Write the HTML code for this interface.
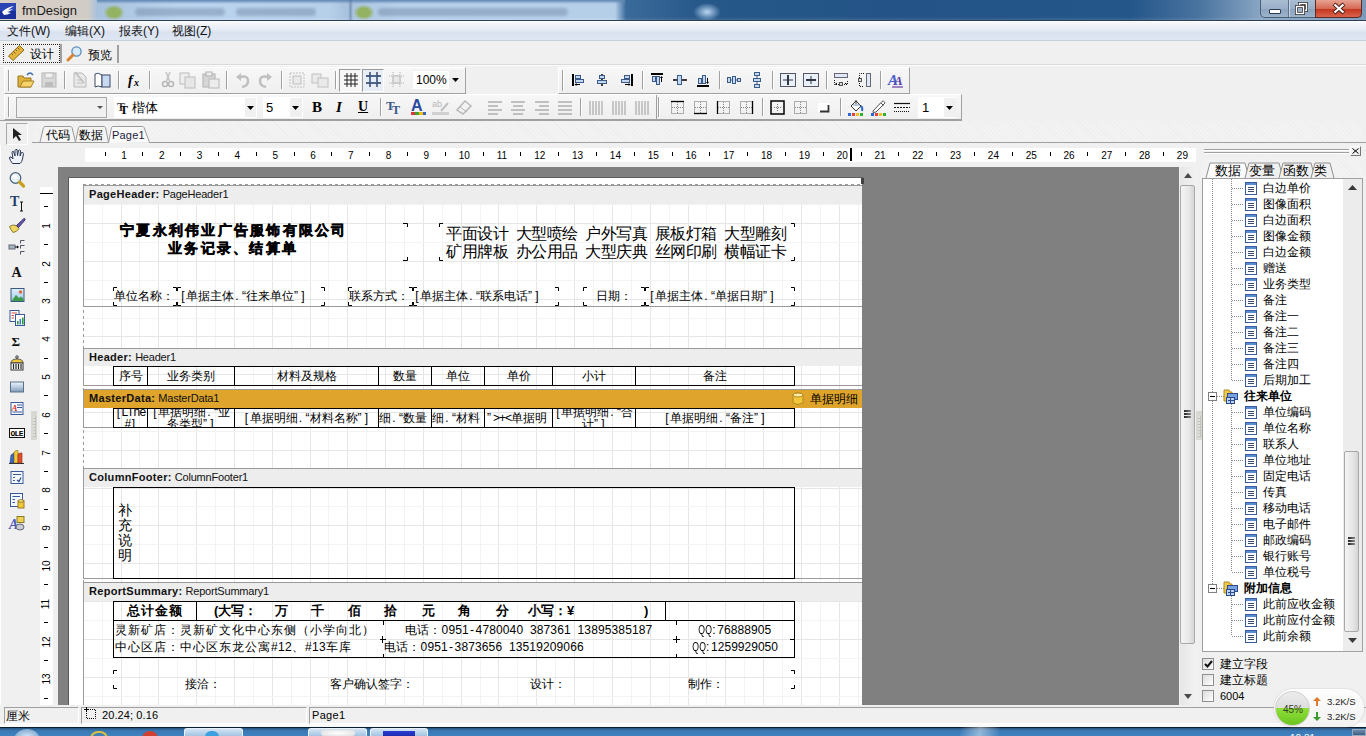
<!DOCTYPE html>
<html><head><meta charset="utf-8"><style>
*{box-sizing:border-box;margin:0;padding:0}
html,body{width:1366px;height:736px;overflow:hidden;background:#f0f0f0;font-family:"Liberation Sans",sans-serif;font-size:12px;color:#000;position:relative}
.a{position:absolute}
.t{position:absolute;white-space:nowrap;line-height:1}
svg{position:absolute;overflow:visible}
</style></head><body>
<div class="a" style="left:0px;top:0px;width:1366px;height:21px;background:linear-gradient(90deg,#d9cfc6 0,#d2ccc6 88px,#a7c1dc 97px,#bcd5ef 180px,#b7d0ea 330px,#a9c3de 345px,#b8d1eb 400px,#b6cfe9 615px,#3a6a9a 626px,#265889 700px,#245487 900px,#24568a 1130px,#4a74a0 1200px,#8aa6c4 1262px,#7a98ba 1366px)"></div>
<div class="a" style="left:97px;top:0px;width:528px;height:4px;background:linear-gradient(#5f86b3,rgba(120,155,195,0))"></div>
<div class="a" style="left:348px;top:0px;width:5px;height:20px;background:linear-gradient(90deg,rgba(80,110,150,.0),rgba(80,110,150,.5),rgba(80,110,150,0))"></div>
<div class="a" style="left:104px;top:5px;width:20px;height:15px;border-radius:6px;background:radial-gradient(#93b262 40%,rgba(150,180,120,0) 75%)"></div>
<div class="a" style="left:354px;top:5px;width:20px;height:15px;border-radius:6px;background:radial-gradient(#93b262 40%,rgba(150,180,120,0) 75%)"></div>
<div class="a" style="left:135px;top:8px;width:90px;height:8px;border-radius:4px;background:rgba(90,110,140,.35);filter:blur(1.5px)"></div>
<div class="a" style="left:236px;top:8px;width:80px;height:8px;border-radius:4px;background:rgba(90,110,140,.35);filter:blur(1.5px)"></div>
<div class="a" style="left:378px;top:8px;width:190px;height:8px;border-radius:4px;background:rgba(90,110,140,.35);filter:blur(1.5px)"></div>
<div class="a" style="left:693px;top:3px;width:28px;height:18px;border-radius:50%;background:radial-gradient(#b9d6f2,rgba(90,140,200,0) 70%)"></div>
<div class="a" style="left:0px;top:17px;width:1366px;height:4px;background:linear-gradient(rgba(255,255,255,0),rgba(255,255,255,.15))"></div>
<div class="a" style="left:0px;top:20px;width:1366px;height:1px;background:#2d3e52"></div>
<svg style="left:0;top:3px" width="17" height="16"><rect x="0" y="0" width="16" height="16" fill="#1b2f9a"/><rect x="0" y="0" width="16" height="8" fill="#2a44b8"/><path d="M2 9 Q7 4 14 3 Q9 6 8 7 L13 6 Q9 9 7 9 L11 10 Q7 12 4 12 Z" fill="#fff"/></svg>
<div class="t" style="left:22px;top:4px;font-size:13px;color:#1a1a1a">fmDesign</div>
<div class="a" style="left:1260px;top:0;width:102px;height:18px;border:1px solid #4d5f72;border-top:none;border-radius:0 0 5px 5px;overflow:hidden;background:linear-gradient(#a9bdd3,#9ab0c9 50%,#8aa2bd 51%,#9cb3cc)"></div>
<div class="a" style="left:1315px;top:0;width:47px;height:18px;border:1px solid #5a2b24;border-top:none;border-radius:0 0 5px 0;background:linear-gradient(#e8a393,#d56a55 50%,#c2321c 51%,#d9644a)"></div>
<div class="a" style="left:1288px;top:0px;width:1px;height:17px;background:#5b6f85"></div>
<div class="a" style="left:1289px;top:0px;width:1px;height:17px;background:#c9d6e4"></div>
<div class="a" style="left:1269px;top:9px;width:12px;height:5px;background:#fff;border:1px solid #2a3a4c;border-radius:1px"></div>
<svg style="left:1295px;top:2px" width="14" height="13"><rect x="4.5" y="1.5" width="7" height="7" fill="none" stroke="#333" stroke-width="3"/><rect x="4.5" y="1.5" width="7" height="7" fill="none" stroke="#fff" stroke-width="1.4"/><rect x="1.5" y="4.5" width="7" height="7" fill="#9ab0c9" stroke="#333" stroke-width="3"/><rect x="1.5" y="4.5" width="7" height="7" fill="none" stroke="#fff" stroke-width="1.4"/></svg>
<svg style="left:1332px;top:3px" width="14" height="12"><path d="M2 1 L12 10 M12 1 L2 10" stroke="#4a2018" stroke-width="4"/><path d="M2.5 1.5 L11.5 9.5 M11.5 1.5 L2.5 9.5" stroke="#fff" stroke-width="2.2"/></svg>
<div class="a" style="left:0px;top:21px;width:1366px;height:20px;background:linear-gradient(#f6f8fc,#e6ebf5 45%,#dae2f0 55%,#dfe6f3);border-top:1px solid #fcfdff;border-bottom:1px solid #c8d0dd"></div>
<div class="t" style="left:7px;top:25px;font-size:12px;color:#111">文件(W)</div>
<div class="t" style="left:65px;top:25px;font-size:12px;color:#111">编辑(X)</div>
<div class="t" style="left:119px;top:25px;font-size:12px;color:#111">报表(Y)</div>
<div class="t" style="left:172px;top:25px;font-size:12px;color:#111">视图(Z)</div>
<div class="a" style="left:0px;top:41px;width:1366px;height:23px;background:#f0f0f0"></div>
<div class="a" style="left:3px;top:44px;width:57px;height:19px;border:1px dotted #222;background:#f0f0f0"></div>
<div class="a" style="left:60px;top:44px;width:2px;height:19px;background:#a0a0a0"></div>
<div class="a" style="left:117px;top:45px;width:2px;height:18px;background:#a0a0a0"></div>
<svg style="left:7px;top:44px" width="18" height="17"><path d="M1.5 12 L12.5 1.5 L17 6 L6 16.5 Z" fill="#e5b43a" stroke="#8a6a1a" stroke-width="1"/><path d="M4.5 9.5 L6 11 M6.5 7.5 L8.5 9.5 M8.5 5.5 L10 7 M10.5 3.5 L12.5 5.5" stroke="#7a5a18" stroke-width="1"/></svg>
<div class="t" style="left:30px;top:48px;font-size:12px">设计</div>
<svg style="left:66px;top:46px" width="17" height="16"><circle cx="10.5" cy="5.5" r="4.6" fill="#d6ecfb" stroke="#5a8ab8" stroke-width="1.3"/><path d="M7 9 L2 14" stroke="#d9822a" stroke-width="3" stroke-linecap="round"/></svg>
<div class="t" style="left:88px;top:49px;font-size:12px">预览</div>
<div class="a" style="left:4px;top:67px;width:462px;height:27px;background:linear-gradient(#f7f7f7,#efefef);border:1px solid #fff;border-right-color:#a0a0a0;border-bottom-color:#a0a0a0"></div>
<div class="a" style="left:8px;top:70px;width:1px;height:21px;background:#a0a0a0"></div>
<div class="a" style="left:9px;top:70px;width:1px;height:21px;background:#fff"></div>
<div class="a" style="left:558px;top:67px;width:352px;height:27px;background:linear-gradient(#f7f7f7,#efefef);border:1px solid #fff;border-right-color:#a0a0a0;border-bottom-color:#a0a0a0"></div>
<div class="a" style="left:562px;top:70px;width:1px;height:21px;background:#a0a0a0"></div>
<div class="a" style="left:563px;top:70px;width:1px;height:21px;background:#fff"></div>
<div class="a" style="left:4px;top:94px;width:958px;height:26px;background:linear-gradient(#f7f7f7,#efefef);border:1px solid #fff;border-right-color:#a0a0a0;border-bottom-color:#a0a0a0"></div>
<div class="a" style="left:8px;top:97px;width:1px;height:20px;background:#a0a0a0"></div>
<div class="a" style="left:9px;top:97px;width:1px;height:20px;background:#fff"></div>
<div class="a" style="left:0px;top:120px;width:962px;height:1px;background:#a0a0a0"></div>
<div class="a" style="left:0px;top:64px;width:1366px;height:1px;background:#d9d9d9"></div>
<div class="a" style="left:0px;top:65px;width:1366px;height:1px;background:#fbfbfb"></div>
<div class="a" style="left:64px;top:71px;width:1px;height:18px;background:#a0a0a0"></div>
<div class="a" style="left:65px;top:71px;width:1px;height:18px;background:#fff"></div>
<div class="a" style="left:118px;top:71px;width:1px;height:18px;background:#a0a0a0"></div>
<div class="a" style="left:119px;top:71px;width:1px;height:18px;background:#fff"></div>
<div class="a" style="left:149px;top:71px;width:1px;height:18px;background:#a0a0a0"></div>
<div class="a" style="left:150px;top:71px;width:1px;height:18px;background:#fff"></div>
<div class="a" style="left:226px;top:71px;width:1px;height:18px;background:#a0a0a0"></div>
<div class="a" style="left:227px;top:71px;width:1px;height:18px;background:#fff"></div>
<div class="a" style="left:281px;top:71px;width:1px;height:18px;background:#a0a0a0"></div>
<div class="a" style="left:282px;top:71px;width:1px;height:18px;background:#fff"></div>
<div class="a" style="left:335px;top:71px;width:1px;height:18px;background:#a0a0a0"></div>
<div class="a" style="left:336px;top:71px;width:1px;height:18px;background:#fff"></div>
<div class="a" style="left:642px;top:71px;width:1px;height:18px;background:#a0a0a0"></div>
<div class="a" style="left:643px;top:71px;width:1px;height:18px;background:#fff"></div>
<div class="a" style="left:719px;top:71px;width:1px;height:18px;background:#a0a0a0"></div>
<div class="a" style="left:720px;top:71px;width:1px;height:18px;background:#fff"></div>
<div class="a" style="left:772px;top:71px;width:1px;height:18px;background:#a0a0a0"></div>
<div class="a" style="left:773px;top:71px;width:1px;height:18px;background:#fff"></div>
<div class="a" style="left:826px;top:71px;width:1px;height:18px;background:#a0a0a0"></div>
<div class="a" style="left:827px;top:71px;width:1px;height:18px;background:#fff"></div>
<div class="a" style="left:880px;top:71px;width:1px;height:18px;background:#a0a0a0"></div>
<div class="a" style="left:881px;top:71px;width:1px;height:18px;background:#fff"></div>
<div class="a" style="left:380px;top:98px;width:1px;height:18px;background:#a0a0a0"></div>
<div class="a" style="left:381px;top:98px;width:1px;height:18px;background:#fff"></div>
<div class="a" style="left:580px;top:98px;width:1px;height:18px;background:#a0a0a0"></div>
<div class="a" style="left:581px;top:98px;width:1px;height:18px;background:#fff"></div>
<div class="a" style="left:762px;top:98px;width:1px;height:18px;background:#a0a0a0"></div>
<div class="a" style="left:763px;top:98px;width:1px;height:18px;background:#fff"></div>
<div class="a" style="left:840px;top:98px;width:1px;height:18px;background:#a0a0a0"></div>
<div class="a" style="left:841px;top:98px;width:1px;height:18px;background:#fff"></div>
<div class="a" style="left:656px;top:95px;width:1px;height:25px;background:#a0a0a0"></div>
<div class="a" style="left:658px;top:97px;width:1px;height:20px;background:#a0a0a0"></div>
<div class="a" style="left:659px;top:97px;width:1px;height:20px;background:#fff"></div>
<svg style="left:17px;top:71px" width="18" height="18"><path d="M1 5 L6 5 L7 7 L14 7 L14 16 L1 16 Z" fill="#e0b23a" stroke="#9a7420"/><path d="M3 16 L6 10 L17 10 L14 16 Z" fill="#f6d46a" stroke="#a57f25"/><path d="M10 4 Q13 0 16 4" stroke="#3f6fb0" fill="none" stroke-width="1.5"/></svg>
<svg style="left:41px;top:72px" width="18" height="18"><rect x="1" y="1" width="14" height="14" fill="#d8d8d8" stroke="#b5b5b5"/><rect x="4" y="1" width="8" height="5" fill="#f0f0f0" stroke="#bbb"/><rect x="4" y="10" width="8" height="5" fill="#bdbdbd"/></svg>
<svg style="left:72px;top:71px" width="18" height="18"><path d="M2 2 L10 2 L14 6 L14 16 L2 16 Z" fill="#e8e8e8" stroke="#b8b8b8"/><path d="M5 9 L11 9 M5 12 L11 12" stroke="#c0c0c0"/><path d="M3 1 L12 12" stroke="#bdbdbd" stroke-width="1.5"/></svg>
<svg style="left:94px;top:72px" width="18" height="18"><path d="M1 2 Q4 0 8 3 L8 15 Q4 13 1 15 Z" fill="#fff" stroke="#3a4a6a"/><rect x="8" y="3" width="8" height="12" fill="#c8daf2" stroke="#3a4a6a"/></svg>
<svg style="left:127px;top:72px" width="18" height="18"><text x="1" y="13" font-family="Liberation Serif" font-style="italic" font-weight="bold" font-size="14">f</text><text x="7" y="14" font-family="Liberation Serif" font-style="italic" font-weight="bold" font-size="10">x</text></svg>
<svg style="left:160px;top:71px" width="18" height="18"><circle cx="5" cy="13" r="2.5" fill="none" stroke="#b8b8b8" stroke-width="1.5"/><circle cx="11" cy="13" r="2.5" fill="none" stroke="#b8b8b8" stroke-width="1.5"/><path d="M6 11 L10 1 M10 11 L6 1" stroke="#c4c4c4" stroke-width="1.5"/></svg>
<svg style="left:179px;top:72px" width="18" height="18"><rect x="1" y="1" width="9" height="11" fill="#eee" stroke="#bcbcbc"/><rect x="6" y="5" width="10" height="11" fill="#e6e6e6" stroke="#bcbcbc"/></svg>
<svg style="left:202px;top:71px" width="18" height="18"><rect x="1" y="3" width="12" height="13" fill="#d6d6d6" stroke="#b0b0b0"/><rect x="4" y="1" width="6" height="4" fill="#eee" stroke="#b0b0b0"/><rect x="7" y="8" width="10" height="9" fill="#ececec" stroke="#b8b8b8"/></svg>
<svg style="left:235px;top:72px" width="18" height="18"><path d="M5 5 Q13 3 13 9 Q13 14 7 15" fill="none" stroke="#c0c0c0" stroke-width="2.5"/><path d="M1 5 L6 1 L6 9 Z" fill="#c0c0c0"/></svg>
<svg style="left:257px;top:72px" width="18" height="18"><path d="M11 5 Q3 3 3 9 Q3 14 9 15" fill="none" stroke="#c0c0c0" stroke-width="2.5"/><path d="M15 5 L10 1 L10 9 Z" fill="#c0c0c0"/></svg>
<svg style="left:288px;top:71px" width="18" height="18"><rect x="2" y="2" width="14" height="14" fill="none" stroke="#c0c0c0" stroke-dasharray="2 1"/><rect x="5" y="5" width="8" height="8" fill="#eaeaea" stroke="#c0c0c0"/></svg>
<svg style="left:311px;top:71px" width="18" height="18"><rect x="1" y="3" width="9" height="9" fill="#eaeaea" stroke="#c0c0c0"/><rect x="7" y="7" width="10" height="9" fill="#eaeaea" stroke="#c0c0c0"/></svg>
<div class="a" style="left:339px;top:69px;width:22px;height:23px;background:#f6f6f6;border:1px solid #9a9a9a;border-right-color:#fff;border-bottom-color:#fff"></div>
<div class="a" style="left:362px;top:69px;width:22px;height:23px;background:#e8eef5;border:1px solid #9a9a9a;border-right-color:#fff;border-bottom-color:#fff"></div>
<svg style="left:343px;top:72px" width="16" height="16"><path d="M1 4 H15 M1 8 H15 M1 12 H15 M4 1 V15 M8 1 V15 M12 1 V15" stroke="#222" stroke-width="1"/></svg>
<svg style="left:365px;top:71px" width="17" height="17"><path d="M1 5 H16 M1 12 H16 M5 1 V16 M12 1 V16" stroke="#223355" stroke-width="1.3"/><rect x="5" y="5" width="7" height="7" fill="none" stroke="#4a6fa0"/></svg>
<svg style="left:388px;top:71px" width="17" height="17"><path d="M1 5 H16 M1 12 H16 M5 1 V16 M12 1 V16" stroke="#b0b0b0" stroke-dasharray="1 1"/><rect x="5" y="5" width="7" height="7" fill="#e8e8e8" stroke="#b8b8b8"/></svg>
<div class="a" style="left:412px;top:70px;width:51px;height:20px;background:#fff;border:1px solid #f0f0f0"></div>
<div class="t" style="left:416px;top:74px;font-size:12px">100%</div>
<div class="a" style="left:449px;top:71px;width:13px;height:18px;background:#f0f0f0"></div>
<svg style="left:452px;top:78px" width="7" height="4"><path d="M0 0 H7 L3.5 4 Z" fill="#000"/></svg>
<svg style="left:571px;top:72px" width="16" height="16"><path d="M2 2 V14" stroke="#000" stroke-width="2"/><rect x="4.5" y="3.5" width="5" height="3" fill="#c4d8f0" stroke="#3a5a8a"/><rect x="4.5" y="7.5" width="8" height="3" fill="#c4d8f0" stroke="#3a5a8a"/><path d="M4 12.5 H9" stroke="#000"/><path d="M3.5 12.5 L5.5 11 V14 Z" fill="#000"/></svg>
<svg style="left:594px;top:72px" width="16" height="16"><path d="M8 2 V14" stroke="#000" stroke-width="1.5"/><rect x="5.5" y="3.5" width="5" height="3" fill="#c4d8f0" stroke="#3a5a8a"/><rect x="3.5" y="8.5" width="9" height="3" fill="#c4d8f0" stroke="#3a5a8a"/></svg>
<svg style="left:618px;top:72px" width="16" height="16"><path d="M14 2 V14" stroke="#000" stroke-width="2"/><rect x="6.5" y="3.5" width="5" height="3" fill="#c4d8f0" stroke="#3a5a8a"/><rect x="3.5" y="7.5" width="8" height="3" fill="#c4d8f0" stroke="#3a5a8a"/><path d="M7 12.5 H12" stroke="#000"/><path d="M12.5 12.5 L10.5 11 V14 Z" fill="#000"/></svg>
<svg style="left:649px;top:72px" width="16" height="16"><path d="M2 2 H14" stroke="#000" stroke-width="2"/><rect x="3.5" y="4.5" width="3" height="5" fill="#c4d8f0" stroke="#3a5a8a"/><rect x="7.5" y="4.5" width="3" height="8" fill="#c4d8f0" stroke="#3a5a8a"/><path d="M12.5 5 V10" stroke="#000"/><path d="M12.5 4 L11 6 H14 Z" fill="#000"/></svg>
<svg style="left:672px;top:72px" width="16" height="16"><path d="M1 8 H15" stroke="#000" stroke-width="1.5"/><rect x="5.5" y="3.5" width="4" height="9" fill="#c4d8f0" stroke="#3a5a8a"/></svg>
<svg style="left:695px;top:72px" width="16" height="16"><path d="M2 14 H14" stroke="#000" stroke-width="2"/><rect x="3.5" y="6.5" width="3" height="5" fill="#c4d8f0" stroke="#3a5a8a"/><rect x="7.5" y="3.5" width="3" height="8" fill="#c4d8f0" stroke="#3a5a8a"/><path d="M12.5 6 V11" stroke="#000"/><path d="M12.5 12 L11 10 H14 Z" fill="#000"/></svg>
<svg style="left:726px;top:72px" width="16" height="16"><rect x="1.5" y="5.5" width="3" height="5" fill="#c4d8f0" stroke="#3a5a8a"/><rect x="6.5" y="4.5" width="3" height="7" fill="#c4d8f0" stroke="#3a5a8a"/><rect x="11.5" y="6.5" width="3" height="3" fill="#c4d8f0" stroke="#3a5a8a"/><path d="M4.5 8 H6.5 M9.5 8 H11.5" stroke="#3a5a8a"/></svg>
<svg style="left:749px;top:72px" width="16" height="16"><rect x="5.5" y="0.5" width="5" height="3" fill="#c4d8f0" stroke="#3a5a8a"/><rect x="4.5" y="6.5" width="7" height="3" fill="#c4d8f0" stroke="#3a5a8a"/><rect x="5.5" y="12.5" width="5" height="3" fill="#c4d8f0" stroke="#3a5a8a"/><path d="M8 3.5 V6.5 M8 9.5 V12.5" stroke="#3a5a8a"/></svg>
<svg style="left:780px;top:72px" width="16" height="16"><rect x="0.5" y="1.5" width="15" height="13" fill="#e8f0fa" stroke="#556"/><path d="M8 3 V13" stroke="#334" stroke-width="2"/><path d="M3 8 H13" stroke="#334"/></svg>
<svg style="left:803px;top:72px" width="16" height="16"><rect x="0.5" y="1.5" width="15" height="13" fill="#e8f0fa" stroke="#556"/><path d="M3 8 H13" stroke="#334" stroke-width="2"/><path d="M8 4 V12" stroke="#334"/></svg>
<svg style="left:833px;top:72px" width="16" height="16"><rect x="1.5" y="1.5" width="13" height="4" fill="#dfe8f4" stroke="#667"/><path d="M1.5 8 V12.5 H14.5 V8" fill="none" stroke="#111" stroke-dasharray="1 1"/><rect x="6.5" y="10.5" width="3" height="3" fill="#ddd" stroke="#555"/><path d="M2 12.5 L4 11 M14 12.5 L12 11" stroke="#000"/></svg>
<svg style="left:857px;top:72px" width="16" height="16"><rect x="9.5" y="1.5" width="4" height="13" fill="#dfe8f4" stroke="#667"/><path d="M7 1.5 H2.5 V14.5 H7" fill="none" stroke="#111" stroke-dasharray="1 1"/><rect x="1.5" y="6.5" width="3" height="3" fill="#ddd" stroke="#555"/></svg>
<svg style="left:888px;top:72px" width="16" height="16"><text x="0" y="13" font-family="Liberation Serif" font-style="italic" font-weight="bold" font-size="15" fill="#4a5ac8">A</text><text x="6" y="13" font-family="Liberation Serif" font-style="italic" font-weight="bold" font-size="13" fill="#5a3aa8">A</text><path d="M4 15 H15" stroke="#6a3aa8" stroke-width="1.2"/></svg>
<div class="a" style="left:16px;top:97px;width:91px;height:21px;background:#f0f0f0;border:1px solid #a8a8a8"></div>
<svg style="left:97px;top:106px" width="6" height="3"><path d="M0 0 H6 L3 3 Z" fill="#555"/></svg>
<div class="a" style="left:114px;top:97px;width:143px;height:21px;background:#fff"></div>
<div class="a" style="left:245px;top:98px;width:11px;height:19px;background:#f0f0f0"></div>
<svg style="left:247px;top:106px" width="7" height="4"><path d="M0 0 H7 L3.5 4 Z" fill="#000"/></svg>
<svg style="left:117px;top:100px" width="14" height="14"><text x="0" y="11" font-family="Liberation Serif" font-weight="bold" font-size="12" fill="#444">T</text><text x="3" y="14" font-family="Liberation Serif" font-weight="bold" font-size="12" fill="#000">T</text></svg>
<div class="t" style="left:132px;top:101px;font-size:13px">楷体</div>
<div class="a" style="left:263px;top:97px;width:40px;height:21px;background:#fff"></div>
<div class="a" style="left:290px;top:98px;width:12px;height:19px;background:#f0f0f0"></div>
<svg style="left:292px;top:106px" width="7" height="4"><path d="M0 0 H7 L3.5 4 Z" fill="#000"/></svg>
<div class="t" style="left:266px;top:101px;font-size:13px">5</div>
<div class="t" style="left:312px;top:100px;font-family:'Liberation Serif',serif;font-weight:bold;font-size:15px">B</div>
<div class="t" style="left:336px;top:100px;font-family:'Liberation Serif',serif;font-style:italic;font-weight:bold;font-size:15px">I</div>
<div class="t" style="left:358px;top:100px;font-family:'Liberation Serif',serif;font-weight:bold;font-size:14px;text-decoration:underline">U</div>
<svg style="left:386px;top:98px" width="18" height="18"><text x="0" y="12" font-family="Liberation Serif" font-weight="bold" font-size="13" fill="#3a5a8a">T</text><text x="6" y="16" font-family="Liberation Serif" font-weight="bold" font-size="12" fill="#3a5a8a">T</text></svg>
<svg style="left:410px;top:97px" width="18" height="18"><text x="1" y="14" font-family="Liberation Sans" font-weight="bold" font-size="16" fill="#2a4aa0">A</text><rect x="1" y="15" width="4" height="3" fill="#d33"/><rect x="5" y="15" width="4" height="3" fill="#3a3"/><rect x="9" y="15" width="4" height="3" fill="#fb0"/><rect x="13" y="15" width="3" height="3" fill="#36c"/></svg>
<svg style="left:432px;top:98px" width="18" height="18"><text x="0" y="9" font-family="Liberation Sans" font-size="9" fill="#b8b8b8">ab</text><path d="M9 13 L16 5" stroke="#c0c0c0" stroke-width="2"/><rect x="0" y="14" width="17" height="3" fill="#d0d0d0"/></svg>
<svg style="left:455px;top:98px" width="18" height="18"><path d="M2 12 L10 3 L16 8 L8 16 Z" fill="none" stroke="#b8b8b8" stroke-width="1.5"/><path d="M5 9 L12 14" stroke="#b8b8b8"/></svg>
<svg style="left:487px;top:100px" width="16" height="16"><path d="M1 2 H15 M1 6 H11 M1 10 H15 M1 14 H11" stroke="#8c8c8c" stroke-width="1"/></svg>
<svg style="left:510px;top:100px" width="16" height="16"><path d="M1 2 H15 M3 6 H13 M1 10 H15 M3 14 H13" stroke="#8c8c8c" stroke-width="1"/></svg>
<svg style="left:534px;top:100px" width="16" height="16"><path d="M1 2 H15 M5 6 H15 M1 10 H15 M5 14 H15" stroke="#8c8c8c" stroke-width="1"/></svg>
<svg style="left:557px;top:100px" width="16" height="16"><path d="M1 2 H15 M1 6 H15 M1 10 H15 M1 14 H15" stroke="#8c8c8c" stroke-width="1"/></svg>
<svg style="left:588px;top:100px" width="16" height="16"><path d="M2 1 V15 M5 1 V15 M8 1 V15 M11 1 V15 M14 1 V15" stroke="#9a9a9a"/></svg>
<svg style="left:611px;top:100px" width="16" height="16"><path d="M2 1 V15 M5 1 V15 M8 1 V15 M11 1 V15 M14 1 V15" stroke="#9a9a9a"/></svg>
<svg style="left:634px;top:100px" width="16" height="16"><path d="M2 1 V15 M5 1 V15 M8 1 V15 M11 1 V15 M14 1 V15" stroke="#9a9a9a"/></svg>
<svg style="left:670px;top:100px" width="15" height="15"><rect x="1.5" y="1.5" width="12" height="12" fill="none" stroke="#666" stroke-dasharray="1 1"/><path d="M7.5 2 V13 M2 7.5 H13" stroke="#888" stroke-dasharray="1 1"/><path d="M1 1.5 H14" stroke="#000" stroke-width="1.3"/></svg>
<svg style="left:693px;top:100px" width="15" height="15"><rect x="1.5" y="1.5" width="12" height="12" fill="none" stroke="#666" stroke-dasharray="1 1"/><path d="M7.5 2 V13 M2 7.5 H13" stroke="#888" stroke-dasharray="1 1"/><path d="M1 13.5 H14" stroke="#000" stroke-width="1.3"/></svg>
<svg style="left:716px;top:100px" width="15" height="15"><rect x="1.5" y="1.5" width="12" height="12" fill="none" stroke="#666" stroke-dasharray="1 1"/><path d="M7.5 2 V13 M2 7.5 H13" stroke="#888" stroke-dasharray="1 1"/><path d="M1.5 1 V14" stroke="#000" stroke-width="1.3"/></svg>
<svg style="left:739px;top:100px" width="15" height="15"><rect x="1.5" y="1.5" width="12" height="12" fill="none" stroke="#666" stroke-dasharray="1 1"/><path d="M7.5 2 V13 M2 7.5 H13" stroke="#888" stroke-dasharray="1 1"/><path d="M13.5 1 V14" stroke="#000" stroke-width="1.3"/></svg>
<svg style="left:770px;top:100px" width="15" height="15"><rect x="1" y="1" width="13" height="13" fill="none" stroke="#000" stroke-width="1.5"/><path d="M7.5 4 V11 M4 7.5 H11" stroke="#777" stroke-dasharray="1 1"/></svg>
<svg style="left:793px;top:100px" width="15" height="15"><rect x="1.5" y="1.5" width="12" height="12" fill="none" stroke="#666" stroke-dasharray="1 1"/><path d="M7.5 2 V13 M2 7.5 H13" stroke="#888" stroke-dasharray="1 1"/></svg>
<svg style="left:817px;top:100px" width="15" height="15"><rect x="1" y="3" width="12" height="9" fill="#fff"/><path d="M3 11.5 H11.5 V5" fill="none" stroke="#333" stroke-width="1.8"/></svg>
<svg style="left:848px;top:99px" width="16" height="17"><path d="M3 7 L8 2 L13 7 L8 12 Z" fill="#fff" stroke="#333"/><path d="M5 6 H12" stroke="#6a8ab0"/><path d="M8 1 V5" stroke="#333"/><path d="M13 7 Q15 9 14 12" stroke="#2a6ad0" stroke-width="2" fill="none"/><rect x="0" y="14" width="3" height="3" fill="#2a6ad0"/><rect x="4" y="14" width="3" height="3" fill="#e04040"/><rect x="8" y="14" width="3" height="3" fill="#f0c020"/><rect x="12" y="14" width="3" height="3" fill="#30b030"/></svg>
<svg style="left:871px;top:99px" width="16" height="17"><path d="M2 12 L11 2.5 Q12.5 1.5 13.5 3 L14 4 L5 13 L2 13.5 Z" fill="#fff" stroke="#555"/><path d="M10 4 L12.5 6.5" stroke="#555"/><rect x="0" y="14" width="3" height="3" fill="#2a6ad0"/><rect x="4" y="14" width="3" height="3" fill="#e04040"/><rect x="8" y="14" width="3" height="3" fill="#f0c020"/><rect x="12" y="14" width="3" height="3" fill="#30b030"/></svg>
<svg style="left:894px;top:102px" width="16" height="11"><path d="M0 1.5 H16" stroke="#111" stroke-width="1.2"/><path d="M0 5.5 H16" stroke="#111" stroke-dasharray="2 1"/><path d="M0 9.5 H16" stroke="#111" stroke-dasharray="1 1"/></svg>
<div class="a" style="left:918px;top:97px;width:38px;height:21px;background:#fff"></div>
<div class="a" style="left:944px;top:98px;width:12px;height:19px;background:#f0f0f0"></div>
<svg style="left:946px;top:106px" width="7" height="4"><path d="M0 0 H7 L3.5 4 Z" fill="#000"/></svg>
<div class="t" style="left:922px;top:101px;font-size:13px">1</div>
<div class="a" style="left:34px;top:121px;width:1328px;height:21px;background-color:#f3f3f3;background-image:repeating-linear-gradient(45deg,rgba(0,0,0,.02) 0 1px,transparent 1px 3px)"></div>
<div class="a" style="left:6px;top:123px;width:22px;height:22px;background:#f0f0f0;border:1px solid #a8a8a8;border-right-color:#fff;border-bottom-color:#fff"></div>
<svg style="left:11px;top:127px" width="12" height="14"><path d="M2 1 L2 12 L5 9 L8 14 L10 13 L7 8 L11 8 Z" fill="#222"/></svg>
<div class="a" style="left:34px;top:142px;width:1332px;height:1px;background:#a0a0a0"></div>
<svg style="left:0;top:0" width="200" height="150"><path d="M32 142.5 H200" stroke="#a0a0a0"/><path d="M40 142 L43.5 127.5 Q44 126.5 45 126.5 H70.5 Q71.5 126.5 72 127.5 L75.5 142" fill="#f4f4f4" stroke="#9a9a9a"/><path d="M75.5 142 L78.5 127.5 Q79 126.5 80 126.5 H104 Q105 126.5 105.5 127.5 L108.5 142" fill="#f4f4f4" stroke="#9a9a9a"/><path d="M108.5 143 L111.5 127.5 Q112 126.5 113 126.5 H142.5 Q143.5 126.5 144 127.5 L149.5 142.5 H200" fill="#fafafa" stroke="#9a9a9a"/></svg>
<div class="t" style="left:46px;top:129px;font-size:12px">代码</div>
<div class="t" style="left:79px;top:129px;font-size:12px">数据</div>
<div class="t" style="left:112px;top:130px;font-size:11px;letter-spacing:0.2px;color:#1a1a3a">Page1</div>
<div class="a" style="left:0px;top:145px;width:34px;height:560px;background:#f0f0f0"></div>
<div class="a" style="left:0px;top:145px;width:1px;height:560px;background:#fff"></div>
<svg style="left:8px;top:148px" width="18" height="18"><path d="M4.5 15.5 Q2 12.5 1.5 10 Q1.5 8.5 3 9 L5 11 L4 4.5 Q4 3 5.5 3.5 L7 8 L7 2.5 Q7.5 1 9 1.5 L9.5 7.5 L10.5 2.5 Q11.5 1.5 12.5 2.5 L12 8 L13.5 4.5 Q15 4 15.5 5.5 L14.5 11 Q14 14 12 15.5 Z" fill="#eef3fb" stroke="#2a3550" stroke-width="1"/></svg>
<svg style="left:8px;top:171px" width="18" height="18"><circle cx="7.5" cy="7" r="5.3" fill="#e4f1fb" stroke="#4a6078" stroke-width="1.2"/><circle cx="6.5" cy="6" r="2.5" fill="#fff" opacity=".8"/><path d="M11.5 11 L15.5 15" stroke="#c8a020" stroke-width="3.2" stroke-linecap="round"/></svg>
<svg style="left:8px;top:193px" width="18" height="18"><text x="2" y="13" font-family="Liberation Serif" font-weight="bold" font-size="14" fill="#1f3f66">T</text><path d="M13.5 9 V18 M12 9 H15 M12 18 H15" stroke="#111" stroke-width="1"/></svg>
<svg style="left:8px;top:216px" width="18" height="18"><path d="M1.5 10.5 Q5 8 8 9.5 L11 12.5 Q9 16 5 16.5 Q3 14 1.5 10.5 Z" fill="#f0d860" stroke="#8a7a30"/><path d="M8.5 9.5 L16 2.5 Q17.5 2.5 17 4 L10.5 11.5 Z" fill="#6a5aa8" stroke="#3a3070"/></svg>
<svg style="left:8px;top:239px" width="18" height="18"><rect x="1" y="6" width="6" height="4" fill="#a8b4c0" stroke="#667"/><path d="M7 8 H10" stroke="#000"/><path d="M9 6.5 L11 8 L9 9.5 Z" fill="#000"/><path d="M16.5 1.5 H12.5 V4.5 M16.5 6.5 H12.5 V9.5 M16.5 12.5 H12.5 V15.5" fill="none" stroke="#556"/></svg>
<svg style="left:8px;top:263px" width="18" height="18"><text x="3.5" y="14" font-family="Liberation Serif" font-weight="bold" font-size="14" fill="#111">A</text></svg>
<svg style="left:8px;top:286px" width="18" height="18"><defs><linearGradient id="sky" x1="0" y1="0" x2="0" y2="1"><stop offset="0" stop-color="#dff0ff"/><stop offset="1" stop-color="#9cc8ea"/></linearGradient></defs><rect x="3" y="2.5" width="13" height="13" fill="url(#sky)" stroke="#3a5a7a"/><path d="M3.5 15 L8 9 L11 12 L13 10.5 L15.5 13 V15 Z" fill="#3c9a4a"/><circle cx="12.5" cy="6" r="1.8" fill="#e06a3a"/></svg>
<svg style="left:8px;top:309px" width="18" height="18"><rect x="2" y="1.5" width="9" height="11" fill="#fff" stroke="#3a5a9a"/><rect x="7.5" y="5.5" width="9" height="11" fill="#fff" stroke="#3a5a9a"/><rect x="9" y="12" width="1.6" height="3.5" fill="#2a9a3a"/><rect x="11.5" y="10" width="1.6" height="5.5" fill="#3a7ad0"/><rect x="14" y="8.5" width="1.6" height="7" fill="#2a9a3a"/><path d="M3.5 4 H9 M3.5 6.5 H6 M3.5 9 H6" stroke="#d04a3a"/></svg>
<svg style="left:8px;top:332px" width="18" height="18"><text x="3.5" y="14" font-family="Liberation Serif" font-weight="bold" font-size="13" fill="#111">&#931;</text></svg>
<svg style="left:8px;top:355px" width="18" height="18"><path d="M9 1.5 V4" stroke="#555"/><circle cx="9" cy="2" r="1.3" fill="none" stroke="#555"/><path d="M3 8 Q3 4 9 4 Q15 4 15 8 Z" fill="#f0c83a" stroke="#555"/><rect x="3" y="8" width="12" height="7" fill="#fff" stroke="#333"/><path d="M5.5 9 V14 M8 9 V14 M10.5 9 V14 M13 9 V14" stroke="#222" stroke-width="1.2"/></svg>
<svg style="left:8px;top:378px" width="18" height="18"><defs><linearGradient id="rg" x1="0" y1="0" x2="0" y2="1"><stop offset="0" stop-color="#eef4fa"/><stop offset=".5" stop-color="#b8cce0"/><stop offset="1" stop-color="#7e98b4"/></linearGradient></defs><rect x="2.5" y="4" width="13" height="10" fill="url(#rg)" stroke="#5a7088"/></svg>
<svg style="left:8px;top:400px" width="18" height="18"><rect x="3" y="2.5" width="12" height="12" fill="#f4f8ff" stroke="#3a5a9a"/><text x="3.5" y="11" font-family="Liberation Serif" font-style="italic" font-weight="bold" font-size="9" fill="#d32">A</text><path d="M9 5 H14 M9 7.5 H14 M4.5 12 H14" stroke="#3a5a9a"/></svg>
<svg style="left:8px;top:424px" width="18" height="18"><rect x="1.5" y="4.5" width="15" height="9" fill="#fff" stroke="#111"/><text x="2.5" y="12" font-family="Liberation Mono" font-weight="bold" font-size="8" fill="#000" textLength="13">OLE</text></svg>
<svg style="left:8px;top:447px" width="18" height="18"><path d="M2 16 L3 8 L6 6 L6 16 Z" fill="#3a6ac8" stroke="#223a7a" stroke-width=".6"/><path d="M6 16 V5 L8 3.5 H10 V16 Z" fill="#f0c83a" stroke="#8a6a10" stroke-width=".6"/><path d="M10 16 V7 L12 6 H14 V16 Z" fill="#e05030" stroke="#8a2a10" stroke-width=".6"/><path d="M1 16.5 H16" stroke="#333"/></svg>
<svg style="left:8px;top:469px" width="18" height="18"><rect x="3" y="2.5" width="12" height="12" fill="#f4f8ff" stroke="#3a5a9a"/><path d="M5 5.5 H13 M5 8.5 H7 M5 11.5 H7" stroke="#3a5a9a"/><path d="M9 11 L11 12.5 L13 8.5" stroke="#2a4a8a" fill="none" stroke-width="1.2"/></svg>
<svg style="left:8px;top:492px" width="18" height="18"><rect x="2.5" y="1.5" width="12" height="13" fill="#f4f8ff" stroke="#3a5a9a"/><path d="M4.5 4.5 H12 M4.5 7.5 H7 M4.5 10.5 H7" stroke="#3a5a9a"/><rect x="10" y="9" width="6" height="7" fill="#f0c83a" stroke="#9a7a20"/><ellipse cx="13" cy="9" rx="3" ry="1.3" fill="#fbe690" stroke="#9a7a20"/></svg>
<svg style="left:8px;top:515px" width="18" height="18"><rect x="9" y="1.5" width="7" height="6" fill="#f0d050" stroke="#8a7a30"/><text x="1" y="14" font-family="Liberation Serif" font-style="italic" font-weight="bold" font-size="14" fill="#4a5ab8">A</text><ellipse cx="12" cy="12" rx="4" ry="3" fill="#c8ccd4" stroke="#667"/></svg>
<div class="a" style="left:31px;top:411px;width:6px;height:29px;background:#d8d8d2"></div>
<div class="a" style="left:33px;top:416px;width:3px;height:3px;background:radial-gradient(circle at 35% 35%,#fff,#8a8a80);border-radius:50%"></div>
<div class="a" style="left:33px;top:419px;width:3px;height:3px;background:radial-gradient(circle at 35% 35%,#fff,#8a8a80);border-radius:50%"></div>
<div class="a" style="left:33px;top:422px;width:3px;height:3px;background:radial-gradient(circle at 35% 35%,#fff,#8a8a80);border-radius:50%"></div>
<div class="a" style="left:33px;top:425px;width:3px;height:3px;background:radial-gradient(circle at 35% 35%,#fff,#8a8a80);border-radius:50%"></div>
<div class="a" style="left:33px;top:428px;width:3px;height:3px;background:radial-gradient(circle at 35% 35%,#fff,#8a8a80);border-radius:50%"></div>
<div class="a" style="left:33px;top:431px;width:3px;height:3px;background:radial-gradient(circle at 35% 35%,#fff,#8a8a80);border-radius:50%"></div>
<div class="a" style="left:33px;top:434px;width:3px;height:3px;background:radial-gradient(circle at 35% 35%,#fff,#8a8a80);border-radius:50%"></div>
<div class="a" style="left:85px;top:148px;width:1111px;height:14px;background:#fff"></div>
<div class="a" style="left:40px;top:187px;width:13px;height:518px;background:#fff"></div>
<div class="t" style="left:114.0px;top:150.5px;width:20px;text-align:center;font-size:10px">1</div>
<div class="a" style="left:105px;top:152px;width:1px;height:4px;background:#000"></div>
<div class="t" style="left:151.8px;top:150.5px;width:20px;text-align:center;font-size:10px">2</div>
<div class="a" style="left:142px;top:152px;width:1px;height:4px;background:#000"></div>
<div class="t" style="left:189.6px;top:150.5px;width:20px;text-align:center;font-size:10px">3</div>
<div class="a" style="left:180px;top:152px;width:1px;height:4px;background:#000"></div>
<div class="t" style="left:227.4px;top:150.5px;width:20px;text-align:center;font-size:10px">4</div>
<div class="a" style="left:218px;top:152px;width:1px;height:4px;background:#000"></div>
<div class="t" style="left:265.2px;top:150.5px;width:20px;text-align:center;font-size:10px">5</div>
<div class="a" style="left:256px;top:152px;width:1px;height:4px;background:#000"></div>
<div class="t" style="left:303.0px;top:150.5px;width:20px;text-align:center;font-size:10px">6</div>
<div class="a" style="left:294px;top:152px;width:1px;height:4px;background:#000"></div>
<div class="t" style="left:340.8px;top:150.5px;width:20px;text-align:center;font-size:10px">7</div>
<div class="a" style="left:331px;top:152px;width:1px;height:4px;background:#000"></div>
<div class="t" style="left:378.6px;top:150.5px;width:20px;text-align:center;font-size:10px">8</div>
<div class="a" style="left:369px;top:152px;width:1px;height:4px;background:#000"></div>
<div class="t" style="left:416.4px;top:150.5px;width:20px;text-align:center;font-size:10px">9</div>
<div class="a" style="left:407px;top:152px;width:1px;height:4px;background:#000"></div>
<div class="t" style="left:454.2px;top:150.5px;width:20px;text-align:center;font-size:10px">10</div>
<div class="a" style="left:445px;top:152px;width:1px;height:4px;background:#000"></div>
<div class="t" style="left:492.0px;top:150.5px;width:20px;text-align:center;font-size:10px">11</div>
<div class="a" style="left:483px;top:152px;width:1px;height:4px;background:#000"></div>
<div class="t" style="left:529.8px;top:150.5px;width:20px;text-align:center;font-size:10px">12</div>
<div class="a" style="left:520px;top:152px;width:1px;height:4px;background:#000"></div>
<div class="t" style="left:567.6px;top:150.5px;width:20px;text-align:center;font-size:10px">13</div>
<div class="a" style="left:558px;top:152px;width:1px;height:4px;background:#000"></div>
<div class="t" style="left:605.4px;top:150.5px;width:20px;text-align:center;font-size:10px">14</div>
<div class="a" style="left:596px;top:152px;width:1px;height:4px;background:#000"></div>
<div class="t" style="left:643.2px;top:150.5px;width:20px;text-align:center;font-size:10px">15</div>
<div class="a" style="left:634px;top:152px;width:1px;height:4px;background:#000"></div>
<div class="t" style="left:681.0px;top:150.5px;width:20px;text-align:center;font-size:10px">16</div>
<div class="a" style="left:672px;top:152px;width:1px;height:4px;background:#000"></div>
<div class="t" style="left:718.8px;top:150.5px;width:20px;text-align:center;font-size:10px">17</div>
<div class="a" style="left:709px;top:152px;width:1px;height:4px;background:#000"></div>
<div class="t" style="left:756.6px;top:150.5px;width:20px;text-align:center;font-size:10px">18</div>
<div class="a" style="left:747px;top:152px;width:1px;height:4px;background:#000"></div>
<div class="t" style="left:794.4px;top:150.5px;width:20px;text-align:center;font-size:10px">19</div>
<div class="a" style="left:785px;top:152px;width:1px;height:4px;background:#000"></div>
<div class="t" style="left:832.2px;top:150.5px;width:20px;text-align:center;font-size:10px">20</div>
<div class="a" style="left:823px;top:152px;width:1px;height:4px;background:#000"></div>
<div class="t" style="left:870.0px;top:150.5px;width:20px;text-align:center;font-size:10px">21</div>
<div class="a" style="left:861px;top:152px;width:1px;height:4px;background:#000"></div>
<div class="t" style="left:907.8px;top:150.5px;width:20px;text-align:center;font-size:10px">22</div>
<div class="a" style="left:898px;top:152px;width:1px;height:4px;background:#000"></div>
<div class="t" style="left:945.6px;top:150.5px;width:20px;text-align:center;font-size:10px">23</div>
<div class="a" style="left:936px;top:152px;width:1px;height:4px;background:#000"></div>
<div class="t" style="left:983.4px;top:150.5px;width:20px;text-align:center;font-size:10px">24</div>
<div class="a" style="left:974px;top:152px;width:1px;height:4px;background:#000"></div>
<div class="t" style="left:1021.2px;top:150.5px;width:20px;text-align:center;font-size:10px">25</div>
<div class="a" style="left:1012px;top:152px;width:1px;height:4px;background:#000"></div>
<div class="t" style="left:1059.0px;top:150.5px;width:20px;text-align:center;font-size:10px">26</div>
<div class="a" style="left:1050px;top:152px;width:1px;height:4px;background:#000"></div>
<div class="t" style="left:1096.8px;top:150.5px;width:20px;text-align:center;font-size:10px">27</div>
<div class="a" style="left:1087px;top:152px;width:1px;height:4px;background:#000"></div>
<div class="t" style="left:1134.6px;top:150.5px;width:20px;text-align:center;font-size:10px">28</div>
<div class="a" style="left:1125px;top:152px;width:1px;height:4px;background:#000"></div>
<div class="t" style="left:1172.4px;top:150.5px;width:20px;text-align:center;font-size:10px">29</div>
<div class="a" style="left:1163px;top:152px;width:1px;height:4px;background:#000"></div>
<div class="a" style="left:1201px;top:152px;width:1px;height:4px;background:#000"></div>
<div class="a" style="left:850px;top:148px;width:2px;height:13px;background:#000"></div>
<div class="a" style="left:40px;top:193px;width:13px;height:1px;background:#000"></div>
<div class="t" style="left:40px;top:219.8px;width:13px;height:12px;font-size:10px;display:flex;align-items:center;justify-content:center"><span style="display:inline-block;transform:rotate(-90deg)">1</span></div>
<div class="a" style="left:44px;top:206px;width:4px;height:1px;background:#000"></div>
<div class="t" style="left:40px;top:257.6px;width:13px;height:12px;font-size:10px;display:flex;align-items:center;justify-content:center"><span style="display:inline-block;transform:rotate(-90deg)">2</span></div>
<div class="a" style="left:44px;top:244px;width:4px;height:1px;background:#000"></div>
<div class="t" style="left:40px;top:295.4px;width:13px;height:12px;font-size:10px;display:flex;align-items:center;justify-content:center"><span style="display:inline-block;transform:rotate(-90deg)">3</span></div>
<div class="a" style="left:44px;top:282px;width:4px;height:1px;background:#000"></div>
<div class="t" style="left:40px;top:333.2px;width:13px;height:12px;font-size:10px;display:flex;align-items:center;justify-content:center"><span style="display:inline-block;transform:rotate(-90deg)">4</span></div>
<div class="a" style="left:44px;top:320px;width:4px;height:1px;background:#000"></div>
<div class="t" style="left:40px;top:371.0px;width:13px;height:12px;font-size:10px;display:flex;align-items:center;justify-content:center"><span style="display:inline-block;transform:rotate(-90deg)">5</span></div>
<div class="a" style="left:44px;top:358px;width:4px;height:1px;background:#000"></div>
<div class="t" style="left:40px;top:408.8px;width:13px;height:12px;font-size:10px;display:flex;align-items:center;justify-content:center"><span style="display:inline-block;transform:rotate(-90deg)">6</span></div>
<div class="a" style="left:44px;top:395px;width:4px;height:1px;background:#000"></div>
<div class="t" style="left:40px;top:446.6px;width:13px;height:12px;font-size:10px;display:flex;align-items:center;justify-content:center"><span style="display:inline-block;transform:rotate(-90deg)">7</span></div>
<div class="a" style="left:44px;top:433px;width:4px;height:1px;background:#000"></div>
<div class="t" style="left:40px;top:484.4px;width:13px;height:12px;font-size:10px;display:flex;align-items:center;justify-content:center"><span style="display:inline-block;transform:rotate(-90deg)">8</span></div>
<div class="a" style="left:44px;top:471px;width:4px;height:1px;background:#000"></div>
<div class="t" style="left:40px;top:522.2px;width:13px;height:12px;font-size:10px;display:flex;align-items:center;justify-content:center"><span style="display:inline-block;transform:rotate(-90deg)">9</span></div>
<div class="a" style="left:44px;top:509px;width:4px;height:1px;background:#000"></div>
<div class="t" style="left:40px;top:560.0px;width:13px;height:12px;font-size:10px;display:flex;align-items:center;justify-content:center"><span style="display:inline-block;transform:rotate(-90deg)">10</span></div>
<div class="a" style="left:44px;top:547px;width:4px;height:1px;background:#000"></div>
<div class="t" style="left:40px;top:597.8px;width:13px;height:12px;font-size:10px;display:flex;align-items:center;justify-content:center"><span style="display:inline-block;transform:rotate(-90deg)">11</span></div>
<div class="a" style="left:44px;top:584px;width:4px;height:1px;background:#000"></div>
<div class="t" style="left:40px;top:635.6px;width:13px;height:12px;font-size:10px;display:flex;align-items:center;justify-content:center"><span style="display:inline-block;transform:rotate(-90deg)">12</span></div>
<div class="a" style="left:44px;top:622px;width:4px;height:1px;background:#000"></div>
<div class="t" style="left:40px;top:673.4px;width:13px;height:12px;font-size:10px;display:flex;align-items:center;justify-content:center"><span style="display:inline-block;transform:rotate(-90deg)">13</span></div>
<div class="a" style="left:44px;top:660px;width:4px;height:1px;background:#000"></div>
<div class="a" style="left:44px;top:698px;width:4px;height:1px;background:#000"></div>
<div class="a" style="left:58px;top:167px;width:1121px;height:538px;background:#808080"></div>
<div class="a" style="left:69px;top:178px;width:793px;height:527px;background:#fff"></div>
<div class="a" style="left:68px;top:177px;width:795px;height:1px;background:#5c5c5c"></div>
<div class="a" style="left:68px;top:177px;width:1px;height:528px;background:#5c5c5c"></div>
<div class="a" style="left:861px;top:178px;width:3px;height:6px;background:#404040"></div>
<svg style="left:0;top:0" width="1366" height="736"><path d="M102.5 185 V705" stroke="#f3f3f3"/><path d="M121.5 185 V705" stroke="#e6e6e6"/><path d="M139.5 185 V705" stroke="#f3f3f3"/><path d="M158.5 185 V705" stroke="#e6e6e6"/><path d="M177.5 185 V705" stroke="#f3f3f3"/><path d="M196.5 185 V705" stroke="#e6e6e6"/><path d="M215.5 185 V705" stroke="#f3f3f3"/><path d="M234.5 185 V705" stroke="#e6e6e6"/><path d="M253.5 185 V705" stroke="#f3f3f3"/><path d="M272.5 185 V705" stroke="#e6e6e6"/><path d="M291.5 185 V705" stroke="#f3f3f3"/><path d="M310.5 185 V705" stroke="#e6e6e6"/><path d="M328.5 185 V705" stroke="#f3f3f3"/><path d="M347.5 185 V705" stroke="#e6e6e6"/><path d="M366.5 185 V705" stroke="#f3f3f3"/><path d="M385.5 185 V705" stroke="#e6e6e6"/><path d="M404.5 185 V705" stroke="#f3f3f3"/><path d="M423.5 185 V705" stroke="#e6e6e6"/><path d="M442.5 185 V705" stroke="#f3f3f3"/><path d="M461.5 185 V705" stroke="#e6e6e6"/><path d="M480.5 185 V705" stroke="#f3f3f3"/><path d="M498.5 185 V705" stroke="#e6e6e6"/><path d="M517.5 185 V705" stroke="#f3f3f3"/><path d="M536.5 185 V705" stroke="#e6e6e6"/><path d="M555.5 185 V705" stroke="#f3f3f3"/><path d="M574.5 185 V705" stroke="#e6e6e6"/><path d="M593.5 185 V705" stroke="#f3f3f3"/><path d="M612.5 185 V705" stroke="#e6e6e6"/><path d="M631.5 185 V705" stroke="#f3f3f3"/><path d="M650.5 185 V705" stroke="#e6e6e6"/><path d="M669.5 185 V705" stroke="#f3f3f3"/><path d="M688.5 185 V705" stroke="#e6e6e6"/><path d="M706.5 185 V705" stroke="#f3f3f3"/><path d="M725.5 185 V705" stroke="#e6e6e6"/><path d="M744.5 185 V705" stroke="#f3f3f3"/><path d="M763.5 185 V705" stroke="#e6e6e6"/><path d="M782.5 185 V705" stroke="#f3f3f3"/><path d="M801.5 185 V705" stroke="#e6e6e6"/><path d="M820.5 185 V705" stroke="#f3f3f3"/><path d="M839.5 185 V705" stroke="#e6e6e6"/><path d="M858.5 185 V705" stroke="#f3f3f3"/><path d="M84 204.5 H862" stroke="#f3f3f3"/><path d="M84 223.5 H862" stroke="#e6e6e6"/><path d="M84 242.5 H862" stroke="#f3f3f3"/><path d="M84 261.5 H862" stroke="#e6e6e6"/><path d="M84 280.5 H862" stroke="#f3f3f3"/><path d="M84 299.5 H862" stroke="#e6e6e6"/><path d="M84 318.5 H862" stroke="#f3f3f3"/><path d="M84 336.5 H862" stroke="#e6e6e6"/><path d="M84 355.5 H862" stroke="#f3f3f3"/><path d="M84 374.5 H862" stroke="#e6e6e6"/><path d="M84 393.5 H862" stroke="#f3f3f3"/><path d="M84 412.5 H862" stroke="#e6e6e6"/><path d="M84 431.5 H862" stroke="#f3f3f3"/><path d="M84 450.5 H862" stroke="#e6e6e6"/><path d="M84 469.5 H862" stroke="#f3f3f3"/><path d="M84 488.5 H862" stroke="#e6e6e6"/><path d="M84 506.5 H862" stroke="#f3f3f3"/><path d="M84 525.5 H862" stroke="#e6e6e6"/><path d="M84 544.5 H862" stroke="#f3f3f3"/><path d="M84 563.5 H862" stroke="#e6e6e6"/><path d="M84 582.5 H862" stroke="#f3f3f3"/><path d="M84 601.5 H862" stroke="#e6e6e6"/><path d="M84 620.5 H862" stroke="#f3f3f3"/><path d="M84 639.5 H862" stroke="#e6e6e6"/><path d="M84 658.5 H862" stroke="#f3f3f3"/><path d="M84 677.5 H862" stroke="#e6e6e6"/><path d="M84 696.5 H862" stroke="#f3f3f3"/></svg>
<svg style="left:0;top:0" width="1366" height="736"><path d="M83.5 184 V705" stroke="#9a9a9a" stroke-dasharray="3 3"/><path d="M83 184.5 H862" stroke="#9a9a9a" stroke-dasharray="3 3"/></svg>
<div class="a" style="left:84px;top:185px;width:778px;height:19px;background:#ededed"></div>
<div class="a" style="left:83px;top:185px;width:779px;height:1px;background:#9a9a9a"></div>
<div class="a" style="left:83px;top:306px;width:779px;height:1px;background:#9a9a9a"></div>
<div class="a" style="left:83px;top:185px;width:1px;height:121px;background:#9a9a9a"></div>
<div class="t" style="left:89px;top:189px;font-size:11px;color:#111"><b style="letter-spacing:0.3px">PageHeader:</b> <span style="letter-spacing:-0.2px">PageHeader1</span></div>
<div class="a" style="left:84px;top:348px;width:778px;height:18px;background:#ededed"></div>
<div class="a" style="left:83px;top:348px;width:779px;height:1px;background:#9a9a9a"></div>
<div class="a" style="left:83px;top:385px;width:779px;height:1px;background:#9a9a9a"></div>
<div class="a" style="left:83px;top:348px;width:1px;height:37px;background:#9a9a9a"></div>
<div class="t" style="left:89px;top:352px;font-size:11px;color:#111"><b style="letter-spacing:0.3px">Header:</b> <span style="letter-spacing:-0.2px">Header1</span></div>
<div class="a" style="left:84px;top:389px;width:778px;height:19px;background:#dea42c"></div>
<div class="a" style="left:83px;top:389px;width:779px;height:1px;background:#9a9a9a"></div>
<div class="a" style="left:83px;top:427px;width:779px;height:1px;background:#9a9a9a"></div>
<div class="a" style="left:83px;top:389px;width:1px;height:38px;background:#9a9a9a"></div>
<div class="t" style="left:89px;top:393px;font-size:11px;color:#111"><b style="letter-spacing:0.3px">MasterData:</b> <span style="letter-spacing:-0.2px">MasterData1</span></div>
<div class="a" style="left:84px;top:468px;width:778px;height:19px;background:#ededed"></div>
<div class="a" style="left:83px;top:468px;width:779px;height:1px;background:#9a9a9a"></div>
<div class="a" style="left:83px;top:578px;width:779px;height:1px;background:#9a9a9a"></div>
<div class="a" style="left:83px;top:468px;width:1px;height:110px;background:#9a9a9a"></div>
<div class="t" style="left:89px;top:472px;font-size:11px;color:#111"><b style="letter-spacing:0.3px">ColumnFooter:</b> <span style="letter-spacing:-0.2px">ColumnFooter1</span></div>
<div class="a" style="left:84px;top:582px;width:778px;height:19px;background:#ededed"></div>
<div class="a" style="left:83px;top:582px;width:779px;height:1px;background:#9a9a9a"></div>
<div class="a" style="left:83px;top:706px;width:779px;height:1px;background:#9a9a9a"></div>
<div class="a" style="left:83px;top:582px;width:1px;height:124px;background:#9a9a9a"></div>
<div class="t" style="left:89px;top:586px;font-size:11px;color:#111"><b style="letter-spacing:0.3px">ReportSummary:</b> <span style="letter-spacing:-0.2px">ReportSummary1</span></div>
<svg style="left:792px;top:392px" width="12" height="14"><ellipse cx="6" cy="3" rx="5" ry="2" fill="#fff6c0" stroke="#b08a20"/><path d="M1 3 V11 Q6 14 11 11 V3" fill="#f2c63a" stroke="#b08a20"/><ellipse cx="6" cy="3" rx="5" ry="2" fill="#fbeaa0" stroke="#b08a20"/></svg>
<div class="t" style="left:810px;top:393px;font-size:12px">单据明细</div>
<div class="t" style="left:120px;top:224px;font-size:14px;font-weight:900;letter-spacing:2.25px;font-family:'Liberation Serif',serif;-webkit-text-stroke:0.5px #000">宁夏永利伟业广告服饰有限公司</div>
<div class="t" style="left:168px;top:242px;font-size:14px;font-weight:900;letter-spacing:2.25px;font-family:'Liberation Serif',serif;-webkit-text-stroke:0.5px #000">业务记录、结算单</div>
<svg style="left:403px;top:223px" width="6" height="40"><path d="M0 0.5 H4.5 V4 M0 37.5 H4.5 V34" fill="none" stroke="#000"/></svg>
<svg style="left:439px;top:223px" width="357" height="39"><path d="M0.5 4 V0.5 H4 M352 0.5 H355.5 V4 M0.5 34 V37.5 H4 M352 37.5 H355.5 V34" fill="none" stroke="#000"/></svg>
<div class="t" style="left:446px;top:226px;font-size:16px;letter-spacing:-0.5px">平面设计<span style="display:inline-block;width:7.5px;text-align:center">&nbsp;</span>大型喷绘<span style="display:inline-block;width:7.5px;text-align:center">&nbsp;</span>户外写真<span style="display:inline-block;width:7.5px;text-align:center">&nbsp;</span>展板灯箱<span style="display:inline-block;width:7.5px;text-align:center">&nbsp;</span>大型雕刻</div>
<div class="t" style="left:446px;top:244px;font-size:16px;letter-spacing:-0.5px">矿用牌板<span style="display:inline-block;width:7.5px;text-align:center">&nbsp;</span>办公用品<span style="display:inline-block;width:7.5px;text-align:center">&nbsp;</span>大型庆典<span style="display:inline-block;width:7.5px;text-align:center">&nbsp;</span>丝网印刷<span style="display:inline-block;width:7.5px;text-align:center">&nbsp;</span>横幅证卡</div>
<svg style="left:113px;top:287px" width="65" height="20"><path d="M0.5 4 V0.5 H4 M60 0.5 H63.5 V4 M0.5 15 V18.5 H4 M60 18.5 H63.5 V15" fill="none" stroke="#000"/></svg>
<div class="t" style="left:114px;top:290px;font-size:12px">单位名称：</div>
<svg style="left:177px;top:287px" width="149" height="20"><path d="M0.5 4 V0.5 H4 M144 0.5 H147.5 V4 M0.5 15 V18.5 H4 M144 18.5 H147.5 V15" fill="none" stroke="#000"/></svg>
<div class="t" style="left:180px;top:290px;font-size:12px"><span style="display:inline-block;width:6px;text-align:center">[</span>单据主体<span style="display:inline-block;width:6px;text-align:center">.</span><span style="display:inline-block;width:6px;text-align:right">“</span>往来单位<span style="display:inline-block;width:6px;text-align:left">”</span><span style="display:inline-block;width:6px;text-align:center">]</span></div>
<svg style="left:348px;top:287px" width="66" height="20"><path d="M0.5 4 V0.5 H4 M61 0.5 H64.5 V4 M0.5 15 V18.5 H4 M61 18.5 H64.5 V15" fill="none" stroke="#000"/></svg>
<div class="t" style="left:349px;top:290px;font-size:12px">联系方式：</div>
<svg style="left:413px;top:287px" width="147" height="20"><path d="M0.5 4 V0.5 H4 M142 0.5 H145.5 V4 M0.5 15 V18.5 H4 M142 18.5 H145.5 V15" fill="none" stroke="#000"/></svg>
<div class="t" style="left:414px;top:290px;font-size:12px"><span style="display:inline-block;width:6px;text-align:center">[</span>单据主体<span style="display:inline-block;width:6px;text-align:center">.</span><span style="display:inline-block;width:6px;text-align:right">“</span>联系电话<span style="display:inline-block;width:6px;text-align:left">”</span><span style="display:inline-block;width:6px;text-align:center">]</span></div>
<svg style="left:583px;top:287px" width="63" height="20"><path d="M0.5 4 V0.5 H4 M58 0.5 H61.5 V4 M0.5 15 V18.5 H4 M58 18.5 H61.5 V15" fill="none" stroke="#000"/></svg>
<div class="t" style="left:596px;top:290px;font-size:12px">日期：</div>
<svg style="left:645px;top:287px" width="151" height="20"><path d="M0.5 4 V0.5 H4 M146 0.5 H149.5 V4 M0.5 15 V18.5 H4 M146 18.5 H149.5 V15" fill="none" stroke="#000"/></svg>
<div class="t" style="left:649px;top:290px;font-size:12px"><span style="display:inline-block;width:6px;text-align:center">[</span>单据主体<span style="display:inline-block;width:6px;text-align:center">.</span><span style="display:inline-block;width:6px;text-align:right">“</span>单据日期<span style="display:inline-block;width:6px;text-align:left">”</span><span style="display:inline-block;width:6px;text-align:center">]</span></div>
<div class="a" style="left:113px;top:366px;width:682px;height:20px;border:1px solid #000"></div>
<div class="a" style="left:147px;top:366px;width:1px;height:20px;background:#000"></div>
<div class="a" style="left:234px;top:366px;width:1px;height:20px;background:#000"></div>
<div class="a" style="left:378px;top:366px;width:1px;height:20px;background:#000"></div>
<div class="a" style="left:431px;top:366px;width:1px;height:20px;background:#000"></div>
<div class="a" style="left:484px;top:366px;width:1px;height:20px;background:#000"></div>
<div class="a" style="left:552px;top:366px;width:1px;height:20px;background:#000"></div>
<div class="a" style="left:635px;top:366px;width:1px;height:20px;background:#000"></div>
<div class="a" style="left:114px;top:367px;width:33px;height:18px;overflow:hidden;text-align:center;font-size:12px"><div style="padding-top:1px">序号</div></div>
<div class="a" style="left:148px;top:367px;width:86px;height:18px;overflow:hidden;text-align:center;font-size:12px"><div style="padding-top:1px">业务类别</div></div>
<div class="a" style="left:235px;top:367px;width:143px;height:18px;overflow:hidden;text-align:center;font-size:12px"><div style="padding-top:1px">材料及规格</div></div>
<div class="a" style="left:379px;top:367px;width:52px;height:18px;overflow:hidden;text-align:center;font-size:12px"><div style="padding-top:1px">数量</div></div>
<div class="a" style="left:432px;top:367px;width:52px;height:18px;overflow:hidden;text-align:center;font-size:12px"><div style="padding-top:1px">单位</div></div>
<div class="a" style="left:485px;top:367px;width:67px;height:18px;overflow:hidden;text-align:center;font-size:12px"><div style="padding-top:1px">单价</div></div>
<div class="a" style="left:553px;top:367px;width:82px;height:18px;overflow:hidden;text-align:center;font-size:12px"><div style="padding-top:1px">小计</div></div>
<div class="a" style="left:636px;top:367px;width:158px;height:18px;overflow:hidden;text-align:center;font-size:12px"><div style="padding-top:1px">备注</div></div>
<div class="a" style="left:113px;top:408px;width:682px;height:20px;border:1px solid #000"></div>
<div class="a" style="left:147px;top:408px;width:1px;height:20px;background:#000"></div>
<div class="a" style="left:234px;top:408px;width:1px;height:20px;background:#000"></div>
<div class="a" style="left:378px;top:408px;width:1px;height:20px;background:#000"></div>
<div class="a" style="left:431px;top:408px;width:1px;height:20px;background:#000"></div>
<div class="a" style="left:484px;top:408px;width:1px;height:20px;background:#000"></div>
<div class="a" style="left:552px;top:408px;width:1px;height:20px;background:#000"></div>
<div class="a" style="left:635px;top:408px;width:1px;height:20px;background:#000"></div>
<div class="a" style="left:114px;top:409px;width:33px;height:18px;overflow:hidden;text-align:center;font-size:12px"><div style="line-height:12px;margin-top:-3px"><span style="display:inline-block;width:6px;text-align:center">[</span><span style="display:inline-block;width:6px;text-align:center">L</span><span style="display:inline-block;width:6px;text-align:center">i</span><span style="display:inline-block;width:6px;text-align:center">n</span><span style="display:inline-block;width:6px;text-align:center">e</span><br><span style="display:inline-block;width:6px;text-align:center">#</span><span style="display:inline-block;width:6px;text-align:center">]</span></div></div>
<div class="a" style="left:148px;top:409px;width:86px;height:18px;overflow:hidden;text-align:center;font-size:12px"><div style="line-height:12px;margin-top:-3px"><span style="display:inline-block;width:6px;text-align:center">[</span>单据明细<span style="display:inline-block;width:6px;text-align:center">.</span><span style="display:inline-block;width:6px;text-align:right">“</span>业<br>务类型<span style="display:inline-block;width:6px;text-align:left">”</span><span style="display:inline-block;width:6px;text-align:center">]</span></div></div>
<div class="a" style="left:235px;top:409px;width:143px;height:18px;overflow:hidden;text-align:center;font-size:12px"><div style="padding-top:1px"><span style="display:inline-block;width:6px;text-align:center">[</span>单据明细<span style="display:inline-block;width:6px;text-align:center">.</span><span style="display:inline-block;width:6px;text-align:right">“</span>材料名称<span style="display:inline-block;width:6px;text-align:left">”</span><span style="display:inline-block;width:6px;text-align:center">]</span></div></div>
<div class="a" style="left:379px;top:409px;width:52px;height:18px;overflow:hidden;text-align:center;font-size:12px"><div style="padding-top:1px;text-align:left;white-space:nowrap">细<span style="display:inline-block;width:6px;text-align:center">.</span><span style="display:inline-block;width:6px;text-align:right">“</span>数量</div></div>
<div class="a" style="left:432px;top:409px;width:52px;height:18px;overflow:hidden;text-align:center;font-size:12px"><div style="padding-top:1px;text-align:left;white-space:nowrap">细<span style="display:inline-block;width:6px;text-align:center">.</span><span style="display:inline-block;width:6px;text-align:right">“</span>材料</div></div>
<div class="a" style="left:485px;top:409px;width:67px;height:18px;overflow:hidden;text-align:center;font-size:12px"><div style="padding-top:1px;text-align:left;white-space:nowrap;margin-left:2px"><span style="display:inline-block;width:6px;text-align:left">”</span><span style="display:inline-block;width:6px;text-align:center">&gt;</span><span style="display:inline-block;width:6px;text-align:center">+</span><span style="display:inline-block;width:6px;text-align:center">&lt;</span>单据明</div></div>
<div class="a" style="left:553px;top:409px;width:82px;height:18px;overflow:hidden;text-align:center;font-size:12px"><div style="line-height:12px;margin-top:-3px"><span style="display:inline-block;width:6px;text-align:center">[</span>单据明细<span style="display:inline-block;width:6px;text-align:center">.</span><span style="display:inline-block;width:6px;text-align:right">“</span>合<br>计<span style="display:inline-block;width:6px;text-align:left">”</span><span style="display:inline-block;width:6px;text-align:center">]</span></div></div>
<div class="a" style="left:636px;top:409px;width:158px;height:18px;overflow:hidden;text-align:center;font-size:12px"><div style="padding-top:1px"><span style="display:inline-block;width:6px;text-align:center">[</span>单据明细<span style="display:inline-block;width:6px;text-align:center">.</span><span style="display:inline-block;width:6px;text-align:right">“</span>备注<span style="display:inline-block;width:6px;text-align:left">”</span><span style="display:inline-block;width:6px;text-align:center">]</span></div></div>
<div class="a" style="left:113px;top:487px;width:682px;height:92px;border:1.5px solid #000"></div>
<div class="t" style="left:118px;top:503px;font-size:14px;line-height:15px;white-space:normal;width:16px;font-family:'Liberation Serif',serif">补<br>充<br>说<br>明</div>
<div class="a" style="left:113px;top:601px;width:682px;height:57px;border:1px solid #000"></div>
<div class="a" style="left:113px;top:620px;width:682px;height:1px;background:#000"></div>
<div class="a" style="left:196px;top:601px;width:1px;height:20px;background:#000"></div>
<div class="a" style="left:665px;top:601px;width:1px;height:20px;background:#000"></div>
<div class="t" style="left:127px;top:604px;font-size:13px;font-weight:bold;letter-spacing:1px">总计金额</div>
<div class="t" style="left:214px;top:604px;font-size:13px;font-weight:bold">(大写：</div>
<div class="t" style="left:275px;top:604px;font-size:13px;font-weight:bold">万</div>
<div class="t" style="left:311px;top:604px;font-size:13px;font-weight:bold">千</div>
<div class="t" style="left:348px;top:604px;font-size:13px;font-weight:bold">佰</div>
<div class="t" style="left:384px;top:604px;font-size:13px;font-weight:bold">拾</div>
<div class="t" style="left:422px;top:604px;font-size:13px;font-weight:bold">元</div>
<div class="t" style="left:458px;top:604px;font-size:13px;font-weight:bold">角</div>
<div class="t" style="left:496px;top:604px;font-size:13px;font-weight:bold">分</div>
<div class="t" style="left:528px;top:604px;font-size:13px;font-weight:bold">小写：¥</div>
<div class="t" style="left:644px;top:604px;font-size:13px;font-weight:bold">)</div>
<div class="t" style="left:115px;top:624px;font-size:12px;letter-spacing:1px">灵新矿店：灵新矿文化中心东侧（小学向北）</div>
<div class="t" style="left:405px;top:624px;font-size:12px;letter-spacing:0.2px">电话：<span style="display:inline-block;width:6.8px;text-align:center">0</span><span style="display:inline-block;width:6.8px;text-align:center">9</span><span style="display:inline-block;width:6.8px;text-align:center">5</span><span style="display:inline-block;width:6.8px;text-align:center">1</span><span style="display:inline-block;width:6.8px;text-align:center">-</span><span style="display:inline-block;width:6.8px;text-align:center">4</span><span style="display:inline-block;width:6.8px;text-align:center">7</span><span style="display:inline-block;width:6.8px;text-align:center">8</span><span style="display:inline-block;width:6.8px;text-align:center">0</span><span style="display:inline-block;width:6.8px;text-align:center">0</span><span style="display:inline-block;width:6.8px;text-align:center">4</span><span style="display:inline-block;width:6.8px;text-align:center">0</span><span style="display:inline-block;width:6.8px;text-align:center">&nbsp;</span><span style="display:inline-block;width:6.8px;text-align:center">3</span><span style="display:inline-block;width:6.8px;text-align:center">8</span><span style="display:inline-block;width:6.8px;text-align:center">7</span><span style="display:inline-block;width:6.8px;text-align:center">3</span><span style="display:inline-block;width:6.8px;text-align:center">6</span><span style="display:inline-block;width:6.8px;text-align:center">1</span><span style="display:inline-block;width:6.8px;text-align:center">&nbsp;</span><span style="display:inline-block;width:6.8px;text-align:center">1</span><span style="display:inline-block;width:6.8px;text-align:center">3</span><span style="display:inline-block;width:6.8px;text-align:center">8</span><span style="display:inline-block;width:6.8px;text-align:center">9</span><span style="display:inline-block;width:6.8px;text-align:center">5</span><span style="display:inline-block;width:6.8px;text-align:center">3</span><span style="display:inline-block;width:6.8px;text-align:center">8</span><span style="display:inline-block;width:6.8px;text-align:center">5</span><span style="display:inline-block;width:6.8px;text-align:center">1</span><span style="display:inline-block;width:6.8px;text-align:center">8</span><span style="display:inline-block;width:6.8px;text-align:center">7</span></div>
<div class="t" style="left:697px;top:624px;font-size:12px"><span style="display:inline-block;width:6.75px;text-align:center"><span style="display:inline-block;transform:scaleX(0.72)">Q</span></span><span style="display:inline-block;width:6.75px;text-align:center"><span style="display:inline-block;transform:scaleX(0.72)">Q</span></span><span style="display:inline-block;width:6.75px;text-align:center">:</span><span style="display:inline-block;width:6.75px;text-align:center">7</span><span style="display:inline-block;width:6.75px;text-align:center">6</span><span style="display:inline-block;width:6.75px;text-align:center">8</span><span style="display:inline-block;width:6.75px;text-align:center">8</span><span style="display:inline-block;width:6.75px;text-align:center">8</span><span style="display:inline-block;width:6.75px;text-align:center">9</span><span style="display:inline-block;width:6.75px;text-align:center">0</span><span style="display:inline-block;width:6.75px;text-align:center">5</span></div>
<div class="t" style="left:115px;top:641px;font-size:12px;letter-spacing:1px">中心区店：中心区东龙公寓<span style="display:inline-block;width:7px;text-align:center">#</span><span style="display:inline-block;width:7px;text-align:center">1</span><span style="display:inline-block;width:7px;text-align:center">2</span>、<span style="display:inline-block;width:7px;text-align:center">#</span><span style="display:inline-block;width:7px;text-align:center">1</span><span style="display:inline-block;width:7px;text-align:center">3</span>车库</div>
<div class="t" style="left:384px;top:641px;font-size:12px;letter-spacing:0.2px">电话：<span style="display:inline-block;width:6.8px;text-align:center">0</span><span style="display:inline-block;width:6.8px;text-align:center">9</span><span style="display:inline-block;width:6.8px;text-align:center">5</span><span style="display:inline-block;width:6.8px;text-align:center">1</span><span style="display:inline-block;width:6.8px;text-align:center">-</span><span style="display:inline-block;width:6.8px;text-align:center">3</span><span style="display:inline-block;width:6.8px;text-align:center">8</span><span style="display:inline-block;width:6.8px;text-align:center">7</span><span style="display:inline-block;width:6.8px;text-align:center">3</span><span style="display:inline-block;width:6.8px;text-align:center">6</span><span style="display:inline-block;width:6.8px;text-align:center">5</span><span style="display:inline-block;width:6.8px;text-align:center">6</span><span style="display:inline-block;width:6.8px;text-align:center">&nbsp;</span><span style="display:inline-block;width:6.8px;text-align:center">1</span><span style="display:inline-block;width:6.8px;text-align:center">3</span><span style="display:inline-block;width:6.8px;text-align:center">5</span><span style="display:inline-block;width:6.8px;text-align:center">1</span><span style="display:inline-block;width:6.8px;text-align:center">9</span><span style="display:inline-block;width:6.8px;text-align:center">2</span><span style="display:inline-block;width:6.8px;text-align:center">0</span><span style="display:inline-block;width:6.8px;text-align:center">9</span><span style="display:inline-block;width:6.8px;text-align:center">0</span><span style="display:inline-block;width:6.8px;text-align:center">6</span><span style="display:inline-block;width:6.8px;text-align:center">6</span></div>
<div class="t" style="left:691px;top:641px;font-size:12px"><span style="display:inline-block;width:6.7px;text-align:center"><span style="display:inline-block;transform:scaleX(0.72)">Q</span></span><span style="display:inline-block;width:6.7px;text-align:center"><span style="display:inline-block;transform:scaleX(0.72)">Q</span></span><span style="display:inline-block;width:6.7px;text-align:center">:</span><span style="display:inline-block;width:6.7px;text-align:center">1</span><span style="display:inline-block;width:6.7px;text-align:center">2</span><span style="display:inline-block;width:6.7px;text-align:center">5</span><span style="display:inline-block;width:6.7px;text-align:center">9</span><span style="display:inline-block;width:6.7px;text-align:center">9</span><span style="display:inline-block;width:6.7px;text-align:center">2</span><span style="display:inline-block;width:6.7px;text-align:center">9</span><span style="display:inline-block;width:6.7px;text-align:center">0</span><span style="display:inline-block;width:6.7px;text-align:center">5</span><span style="display:inline-block;width:6.7px;text-align:center">0</span></div>
<svg style="left:0;top:0" width="1366" height="736"><path d="M383.5 621 V625 M383.5 654 V657" stroke="#000"/></svg>
<svg style="left:0;top:0" width="1366" height="736"><path d="M380 639.5 H386 M382.5 636 V643 M673 639.5 H680 M676.5 636 V643 M676.5 621 V625 M676.5 654 V657 M794 639.5 H790" stroke="#000"/></svg>
<svg style="left:113px;top:670px" width="683" height="20"><path d="M0.5 4 V0.5 H4 M678 0.5 H681.5 V4 M0.5 15 V18.5 H4 M678 18.5 H681.5 V15" fill="none" stroke="#000"/></svg>
<div class="t" style="left:185px;top:678px;font-size:12px">接洽：</div>
<div class="t" style="left:330px;top:678px;font-size:12px">客户确认签字：</div>
<div class="t" style="left:530px;top:678px;font-size:12px">设计：</div>
<div class="t" style="left:688px;top:678px;font-size:12px">制作：</div>
<div class="a" style="left:1179px;top:162px;width:18px;height:543px;background:#f0f0f0"></div>
<div class="a" style="left:1180px;top:167px;width:16px;height:538px;background:linear-gradient(90deg,#e6e6e6,#f2f2f2)"></div>
<svg style="left:1184px;top:173px" width="8" height="5"><path d="M0 5 L4 0 L8 5 Z" fill="#4a4a4a"/></svg>
<svg style="left:1184px;top:694px" width="8" height="5"><path d="M0 0 L4 5 L8 0 Z" fill="#4a4a4a"/></svg>
<div class="a" style="left:1180px;top:185px;width:15px;height:459px;background:linear-gradient(90deg,#f4f4f4,#e8e8e8 60%,#d6d6d6);border:1px solid #a8a8a8;border-radius:2px"></div>
<div class="a" style="left:1184px;top:410px;width:7px;height:2px;background:linear-gradient(90deg,#222,#888)"></div>
<div class="a" style="left:1184px;top:413px;width:7px;height:2px;background:linear-gradient(90deg,#222,#888)"></div>
<div class="a" style="left:1184px;top:416px;width:7px;height:2px;background:linear-gradient(90deg,#222,#888)"></div>
<div class="a" style="left:1197px;top:143px;width:169px;height:562px;background:#f0f0f0"></div>
<div class="a" style="left:1196px;top:411px;width:6px;height:29px;background:#d8d8d2"></div>
<div class="a" style="left:1198px;top:416px;width:3px;height:3px;background:radial-gradient(circle at 35% 35%,#fff,#8a8a80);border-radius:50%"></div>
<div class="a" style="left:1198px;top:419px;width:3px;height:3px;background:radial-gradient(circle at 35% 35%,#fff,#8a8a80);border-radius:50%"></div>
<div class="a" style="left:1198px;top:422px;width:3px;height:3px;background:radial-gradient(circle at 35% 35%,#fff,#8a8a80);border-radius:50%"></div>
<div class="a" style="left:1198px;top:425px;width:3px;height:3px;background:radial-gradient(circle at 35% 35%,#fff,#8a8a80);border-radius:50%"></div>
<div class="a" style="left:1198px;top:428px;width:3px;height:3px;background:radial-gradient(circle at 35% 35%,#fff,#8a8a80);border-radius:50%"></div>
<div class="a" style="left:1198px;top:431px;width:3px;height:3px;background:radial-gradient(circle at 35% 35%,#fff,#8a8a80);border-radius:50%"></div>
<div class="a" style="left:1198px;top:434px;width:3px;height:3px;background:radial-gradient(circle at 35% 35%,#fff,#8a8a80);border-radius:50%"></div>
<div class="a" style="left:1204px;top:149px;width:145px;height:2px;border-top:1px solid #a0a0a0;border-bottom:1px solid #fff"></div>
<div class="a" style="left:1204px;top:152px;width:145px;height:2px;border-top:1px solid #a0a0a0;border-bottom:1px solid #fff"></div>
<div class="a" style="left:1350px;top:146px;width:11px;height:10px;border:1px solid #fff;border-right-color:#777;border-bottom-color:#777;background:#f0f0f0"></div>
<svg style="left:1352px;top:148px" width="7" height="6"><path d="M0.5 0.5 L6.5 5.5 M6.5 0.5 L0.5 5.5" stroke="#000"/></svg>
<div class="a" style="left:1203px;top:158px;width:160px;height:20px;background-color:#f3f3f3;background-image:repeating-linear-gradient(45deg,rgba(0,0,0,.02) 0 1px,transparent 1px 3px)"></div>
<svg style="left:1205px;top:161px" width="140" height="18"><path d="M1 17 L5 2 H40 L44 17" fill="#fafafa" stroke="#909090"/><path d="M40 17 L44 2 H74 L78 17" fill="#f0f0f0" stroke="#909090"/><path d="M74 17 L78 2 H106 L110 17" fill="#f0f0f0" stroke="#909090"/><path d="M106 17 L110 2 H125 L129 17" fill="#f0f0f0" stroke="#909090"/></svg>
<div class="t" style="left:1215px;top:164px;font-size:13px">数据</div>
<div class="t" style="left:1249px;top:164px;font-size:13px">变量</div>
<div class="t" style="left:1283px;top:164px;font-size:13px">函数</div>
<div class="t" style="left:1314px;top:164px;font-size:13px">类</div>
<div class="a" style="left:1202px;top:178px;width:161px;height:474px;background:#fff;border:1px solid #a0a0a0"></div>
<div class="a" style="left:1343px;top:179px;width:19px;height:472px;background:#ececec"></div>
<svg style="left:1348px;top:185px" width="9" height="5"><path d="M0 5 L4.5 0 L9 5 Z" fill="#3a3a3a"/></svg>
<svg style="left:1348px;top:638px" width="9" height="5"><path d="M0 0 L4.5 5 L9 0 Z" fill="#3a3a3a"/></svg>
<div class="a" style="left:1344px;top:451px;width:15px;height:181px;background:linear-gradient(90deg,#f4f4f4,#e6e6e6 60%,#d4d4d4);border:1px solid #a8a8a8;border-radius:2px"></div>
<div class="a" style="left:1348px;top:537px;width:7px;height:2px;background:linear-gradient(90deg,#222,#888)"></div>
<div class="a" style="left:1348px;top:540px;width:7px;height:2px;background:linear-gradient(90deg,#222,#888)"></div>
<div class="a" style="left:1348px;top:543px;width:7px;height:2px;background:linear-gradient(90deg,#222,#888)"></div>
<svg style="left:1232px;top:188px" width="12" height="2"><path d="M0 0.5 H12" stroke="#888" stroke-dasharray="1 1"/></svg>
<svg style="left:1245px;top:182px" width="13" height="14"><rect x="0.5" y="0.5" width="11" height="12" fill="#fff" stroke="#3a5aa0"/><rect x="1" y="1" width="10" height="2" fill="#5a8ad0"/><path d="M3 5.5 H9 M3 7.5 H9 M3 9.5 H9" stroke="#3a4a6a"/></svg>
<div class="t" style="left:1263px;top:182px;font-size:12px">白边单价</div>
<svg style="left:1232px;top:204px" width="12" height="2"><path d="M0 0.5 H12" stroke="#888" stroke-dasharray="1 1"/></svg>
<svg style="left:1245px;top:198px" width="13" height="14"><rect x="0.5" y="0.5" width="11" height="12" fill="#fff" stroke="#3a5aa0"/><rect x="1" y="1" width="10" height="2" fill="#5a8ad0"/><path d="M3 5.5 H9 M3 7.5 H9 M3 9.5 H9" stroke="#3a4a6a"/></svg>
<div class="t" style="left:1263px;top:198px;font-size:12px">图像面积</div>
<svg style="left:1232px;top:220px" width="12" height="2"><path d="M0 0.5 H12" stroke="#888" stroke-dasharray="1 1"/></svg>
<svg style="left:1245px;top:214px" width="13" height="14"><rect x="0.5" y="0.5" width="11" height="12" fill="#fff" stroke="#3a5aa0"/><rect x="1" y="1" width="10" height="2" fill="#5a8ad0"/><path d="M3 5.5 H9 M3 7.5 H9 M3 9.5 H9" stroke="#3a4a6a"/></svg>
<div class="t" style="left:1263px;top:214px;font-size:12px">白边面积</div>
<svg style="left:1232px;top:236px" width="12" height="2"><path d="M0 0.5 H12" stroke="#888" stroke-dasharray="1 1"/></svg>
<svg style="left:1245px;top:230px" width="13" height="14"><rect x="0.5" y="0.5" width="11" height="12" fill="#fff" stroke="#3a5aa0"/><rect x="1" y="1" width="10" height="2" fill="#5a8ad0"/><path d="M3 5.5 H9 M3 7.5 H9 M3 9.5 H9" stroke="#3a4a6a"/></svg>
<div class="t" style="left:1263px;top:230px;font-size:12px">图像金额</div>
<svg style="left:1232px;top:252px" width="12" height="2"><path d="M0 0.5 H12" stroke="#888" stroke-dasharray="1 1"/></svg>
<svg style="left:1245px;top:246px" width="13" height="14"><rect x="0.5" y="0.5" width="11" height="12" fill="#fff" stroke="#3a5aa0"/><rect x="1" y="1" width="10" height="2" fill="#5a8ad0"/><path d="M3 5.5 H9 M3 7.5 H9 M3 9.5 H9" stroke="#3a4a6a"/></svg>
<div class="t" style="left:1263px;top:246px;font-size:12px">白边金额</div>
<svg style="left:1232px;top:268px" width="12" height="2"><path d="M0 0.5 H12" stroke="#888" stroke-dasharray="1 1"/></svg>
<svg style="left:1245px;top:262px" width="13" height="14"><rect x="0.5" y="0.5" width="11" height="12" fill="#fff" stroke="#3a5aa0"/><rect x="1" y="1" width="10" height="2" fill="#5a8ad0"/><path d="M3 5.5 H9 M3 7.5 H9 M3 9.5 H9" stroke="#3a4a6a"/></svg>
<div class="t" style="left:1263px;top:262px;font-size:12px">赠送</div>
<svg style="left:1232px;top:284px" width="12" height="2"><path d="M0 0.5 H12" stroke="#888" stroke-dasharray="1 1"/></svg>
<svg style="left:1245px;top:278px" width="13" height="14"><rect x="0.5" y="0.5" width="11" height="12" fill="#fff" stroke="#3a5aa0"/><rect x="1" y="1" width="10" height="2" fill="#5a8ad0"/><path d="M3 5.5 H9 M3 7.5 H9 M3 9.5 H9" stroke="#3a4a6a"/></svg>
<div class="t" style="left:1263px;top:278px;font-size:12px">业务类型</div>
<svg style="left:1232px;top:300px" width="12" height="2"><path d="M0 0.5 H12" stroke="#888" stroke-dasharray="1 1"/></svg>
<svg style="left:1245px;top:294px" width="13" height="14"><rect x="0.5" y="0.5" width="11" height="12" fill="#fff" stroke="#3a5aa0"/><rect x="1" y="1" width="10" height="2" fill="#5a8ad0"/><path d="M3 5.5 H9 M3 7.5 H9 M3 9.5 H9" stroke="#3a4a6a"/></svg>
<div class="t" style="left:1263px;top:294px;font-size:12px">备注</div>
<svg style="left:1232px;top:316px" width="12" height="2"><path d="M0 0.5 H12" stroke="#888" stroke-dasharray="1 1"/></svg>
<svg style="left:1245px;top:310px" width="13" height="14"><rect x="0.5" y="0.5" width="11" height="12" fill="#fff" stroke="#3a5aa0"/><rect x="1" y="1" width="10" height="2" fill="#5a8ad0"/><path d="M3 5.5 H9 M3 7.5 H9 M3 9.5 H9" stroke="#3a4a6a"/></svg>
<div class="t" style="left:1263px;top:310px;font-size:12px">备注一</div>
<svg style="left:1232px;top:332px" width="12" height="2"><path d="M0 0.5 H12" stroke="#888" stroke-dasharray="1 1"/></svg>
<svg style="left:1245px;top:326px" width="13" height="14"><rect x="0.5" y="0.5" width="11" height="12" fill="#fff" stroke="#3a5aa0"/><rect x="1" y="1" width="10" height="2" fill="#5a8ad0"/><path d="M3 5.5 H9 M3 7.5 H9 M3 9.5 H9" stroke="#3a4a6a"/></svg>
<div class="t" style="left:1263px;top:326px;font-size:12px">备注二</div>
<svg style="left:1232px;top:348px" width="12" height="2"><path d="M0 0.5 H12" stroke="#888" stroke-dasharray="1 1"/></svg>
<svg style="left:1245px;top:342px" width="13" height="14"><rect x="0.5" y="0.5" width="11" height="12" fill="#fff" stroke="#3a5aa0"/><rect x="1" y="1" width="10" height="2" fill="#5a8ad0"/><path d="M3 5.5 H9 M3 7.5 H9 M3 9.5 H9" stroke="#3a4a6a"/></svg>
<div class="t" style="left:1263px;top:342px;font-size:12px">备注三</div>
<svg style="left:1232px;top:364px" width="12" height="2"><path d="M0 0.5 H12" stroke="#888" stroke-dasharray="1 1"/></svg>
<svg style="left:1245px;top:358px" width="13" height="14"><rect x="0.5" y="0.5" width="11" height="12" fill="#fff" stroke="#3a5aa0"/><rect x="1" y="1" width="10" height="2" fill="#5a8ad0"/><path d="M3 5.5 H9 M3 7.5 H9 M3 9.5 H9" stroke="#3a4a6a"/></svg>
<div class="t" style="left:1263px;top:358px;font-size:12px">备注四</div>
<svg style="left:1232px;top:380px" width="12" height="2"><path d="M0 0.5 H12" stroke="#888" stroke-dasharray="1 1"/></svg>
<svg style="left:1245px;top:374px" width="13" height="14"><rect x="0.5" y="0.5" width="11" height="12" fill="#fff" stroke="#3a5aa0"/><rect x="1" y="1" width="10" height="2" fill="#5a8ad0"/><path d="M3 5.5 H9 M3 7.5 H9 M3 9.5 H9" stroke="#3a4a6a"/></svg>
<div class="t" style="left:1263px;top:374px;font-size:12px">后期加工</div>
<div class="a" style="left:1208px;top:392px;width:9px;height:9px;border:1px solid #808080;background:#fff"></div>
<div class="a" style="left:1210px;top:396px;width:5px;height:1px;background:#000"></div>
<svg style="left:1217px;top:396px" width="7" height="2"><path d="M0 0.5 H7" stroke="#888" stroke-dasharray="1 1"/></svg>
<svg style="left:1223px;top:388px" width="17" height="17"><path d="M1 2 H6 L7 4 H9 V13 H1 Z" fill="#f4c84a" stroke="#b08a20"/><rect x="4.5" y="5.5" width="10" height="6" fill="#7aa0e0" stroke="#2a4a90"/><rect x="3.5" y="9.5" width="8" height="6" fill="#c0d4f4" stroke="#2a4a90"/><path d="M5 12.5 H11 M7.5 10 V15" stroke="#2a4a90"/></svg>
<div class="t" style="left:1244px;top:390px;font-size:12px;font-weight:bold">往来单位</div>
<svg style="left:1232px;top:412px" width="12" height="2"><path d="M0 0.5 H12" stroke="#888" stroke-dasharray="1 1"/></svg>
<svg style="left:1245px;top:406px" width="13" height="14"><rect x="0.5" y="0.5" width="11" height="12" fill="#fff" stroke="#3a5aa0"/><rect x="1" y="1" width="10" height="2" fill="#5a8ad0"/><path d="M3 5.5 H9 M3 7.5 H9 M3 9.5 H9" stroke="#3a4a6a"/></svg>
<div class="t" style="left:1263px;top:406px;font-size:12px">单位编码</div>
<svg style="left:1232px;top:428px" width="12" height="2"><path d="M0 0.5 H12" stroke="#888" stroke-dasharray="1 1"/></svg>
<svg style="left:1245px;top:422px" width="13" height="14"><rect x="0.5" y="0.5" width="11" height="12" fill="#fff" stroke="#3a5aa0"/><rect x="1" y="1" width="10" height="2" fill="#5a8ad0"/><path d="M3 5.5 H9 M3 7.5 H9 M3 9.5 H9" stroke="#3a4a6a"/></svg>
<div class="t" style="left:1263px;top:422px;font-size:12px">单位名称</div>
<svg style="left:1232px;top:444px" width="12" height="2"><path d="M0 0.5 H12" stroke="#888" stroke-dasharray="1 1"/></svg>
<svg style="left:1245px;top:438px" width="13" height="14"><rect x="0.5" y="0.5" width="11" height="12" fill="#fff" stroke="#3a5aa0"/><rect x="1" y="1" width="10" height="2" fill="#5a8ad0"/><path d="M3 5.5 H9 M3 7.5 H9 M3 9.5 H9" stroke="#3a4a6a"/></svg>
<div class="t" style="left:1263px;top:438px;font-size:12px">联系人</div>
<svg style="left:1232px;top:460px" width="12" height="2"><path d="M0 0.5 H12" stroke="#888" stroke-dasharray="1 1"/></svg>
<svg style="left:1245px;top:454px" width="13" height="14"><rect x="0.5" y="0.5" width="11" height="12" fill="#fff" stroke="#3a5aa0"/><rect x="1" y="1" width="10" height="2" fill="#5a8ad0"/><path d="M3 5.5 H9 M3 7.5 H9 M3 9.5 H9" stroke="#3a4a6a"/></svg>
<div class="t" style="left:1263px;top:454px;font-size:12px">单位地址</div>
<svg style="left:1232px;top:476px" width="12" height="2"><path d="M0 0.5 H12" stroke="#888" stroke-dasharray="1 1"/></svg>
<svg style="left:1245px;top:470px" width="13" height="14"><rect x="0.5" y="0.5" width="11" height="12" fill="#fff" stroke="#3a5aa0"/><rect x="1" y="1" width="10" height="2" fill="#5a8ad0"/><path d="M3 5.5 H9 M3 7.5 H9 M3 9.5 H9" stroke="#3a4a6a"/></svg>
<div class="t" style="left:1263px;top:470px;font-size:12px">固定电话</div>
<svg style="left:1232px;top:492px" width="12" height="2"><path d="M0 0.5 H12" stroke="#888" stroke-dasharray="1 1"/></svg>
<svg style="left:1245px;top:486px" width="13" height="14"><rect x="0.5" y="0.5" width="11" height="12" fill="#fff" stroke="#3a5aa0"/><rect x="1" y="1" width="10" height="2" fill="#5a8ad0"/><path d="M3 5.5 H9 M3 7.5 H9 M3 9.5 H9" stroke="#3a4a6a"/></svg>
<div class="t" style="left:1263px;top:486px;font-size:12px">传真</div>
<svg style="left:1232px;top:508px" width="12" height="2"><path d="M0 0.5 H12" stroke="#888" stroke-dasharray="1 1"/></svg>
<svg style="left:1245px;top:502px" width="13" height="14"><rect x="0.5" y="0.5" width="11" height="12" fill="#fff" stroke="#3a5aa0"/><rect x="1" y="1" width="10" height="2" fill="#5a8ad0"/><path d="M3 5.5 H9 M3 7.5 H9 M3 9.5 H9" stroke="#3a4a6a"/></svg>
<div class="t" style="left:1263px;top:502px;font-size:12px">移动电话</div>
<svg style="left:1232px;top:524px" width="12" height="2"><path d="M0 0.5 H12" stroke="#888" stroke-dasharray="1 1"/></svg>
<svg style="left:1245px;top:518px" width="13" height="14"><rect x="0.5" y="0.5" width="11" height="12" fill="#fff" stroke="#3a5aa0"/><rect x="1" y="1" width="10" height="2" fill="#5a8ad0"/><path d="M3 5.5 H9 M3 7.5 H9 M3 9.5 H9" stroke="#3a4a6a"/></svg>
<div class="t" style="left:1263px;top:518px;font-size:12px">电子邮件</div>
<svg style="left:1232px;top:540px" width="12" height="2"><path d="M0 0.5 H12" stroke="#888" stroke-dasharray="1 1"/></svg>
<svg style="left:1245px;top:534px" width="13" height="14"><rect x="0.5" y="0.5" width="11" height="12" fill="#fff" stroke="#3a5aa0"/><rect x="1" y="1" width="10" height="2" fill="#5a8ad0"/><path d="M3 5.5 H9 M3 7.5 H9 M3 9.5 H9" stroke="#3a4a6a"/></svg>
<div class="t" style="left:1263px;top:534px;font-size:12px">邮政编码</div>
<svg style="left:1232px;top:556px" width="12" height="2"><path d="M0 0.5 H12" stroke="#888" stroke-dasharray="1 1"/></svg>
<svg style="left:1245px;top:550px" width="13" height="14"><rect x="0.5" y="0.5" width="11" height="12" fill="#fff" stroke="#3a5aa0"/><rect x="1" y="1" width="10" height="2" fill="#5a8ad0"/><path d="M3 5.5 H9 M3 7.5 H9 M3 9.5 H9" stroke="#3a4a6a"/></svg>
<div class="t" style="left:1263px;top:550px;font-size:12px">银行账号</div>
<svg style="left:1232px;top:572px" width="12" height="2"><path d="M0 0.5 H12" stroke="#888" stroke-dasharray="1 1"/></svg>
<svg style="left:1245px;top:566px" width="13" height="14"><rect x="0.5" y="0.5" width="11" height="12" fill="#fff" stroke="#3a5aa0"/><rect x="1" y="1" width="10" height="2" fill="#5a8ad0"/><path d="M3 5.5 H9 M3 7.5 H9 M3 9.5 H9" stroke="#3a4a6a"/></svg>
<div class="t" style="left:1263px;top:566px;font-size:12px">单位税号</div>
<div class="a" style="left:1208px;top:584px;width:9px;height:9px;border:1px solid #808080;background:#fff"></div>
<div class="a" style="left:1210px;top:588px;width:5px;height:1px;background:#000"></div>
<svg style="left:1217px;top:588px" width="7" height="2"><path d="M0 0.5 H7" stroke="#888" stroke-dasharray="1 1"/></svg>
<svg style="left:1223px;top:580px" width="17" height="17"><path d="M1 2 H6 L7 4 H9 V13 H1 Z" fill="#f4c84a" stroke="#b08a20"/><rect x="4.5" y="5.5" width="10" height="6" fill="#7aa0e0" stroke="#2a4a90"/><rect x="3.5" y="9.5" width="8" height="6" fill="#c0d4f4" stroke="#2a4a90"/><path d="M5 12.5 H11 M7.5 10 V15" stroke="#2a4a90"/></svg>
<div class="t" style="left:1244px;top:582px;font-size:12px;font-weight:bold">附加信息</div>
<svg style="left:1232px;top:604px" width="12" height="2"><path d="M0 0.5 H12" stroke="#888" stroke-dasharray="1 1"/></svg>
<svg style="left:1245px;top:598px" width="13" height="14"><rect x="0.5" y="0.5" width="11" height="12" fill="#fff" stroke="#3a5aa0"/><rect x="1" y="1" width="10" height="2" fill="#5a8ad0"/><path d="M3 5.5 H9 M3 7.5 H9 M3 9.5 H9" stroke="#3a4a6a"/></svg>
<div class="t" style="left:1263px;top:598px;font-size:12px">此前应收金额</div>
<svg style="left:1232px;top:620px" width="12" height="2"><path d="M0 0.5 H12" stroke="#888" stroke-dasharray="1 1"/></svg>
<svg style="left:1245px;top:614px" width="13" height="14"><rect x="0.5" y="0.5" width="11" height="12" fill="#fff" stroke="#3a5aa0"/><rect x="1" y="1" width="10" height="2" fill="#5a8ad0"/><path d="M3 5.5 H9 M3 7.5 H9 M3 9.5 H9" stroke="#3a4a6a"/></svg>
<div class="t" style="left:1263px;top:614px;font-size:12px">此前应付金额</div>
<svg style="left:1232px;top:636px" width="12" height="2"><path d="M0 0.5 H12" stroke="#888" stroke-dasharray="1 1"/></svg>
<svg style="left:1245px;top:630px" width="13" height="14"><rect x="0.5" y="0.5" width="11" height="12" fill="#fff" stroke="#3a5aa0"/><rect x="1" y="1" width="10" height="2" fill="#5a8ad0"/><path d="M3 5.5 H9 M3 7.5 H9 M3 9.5 H9" stroke="#3a4a6a"/></svg>
<div class="t" style="left:1263px;top:630px;font-size:12px">此前余额</div>
<svg style="left:0;top:0" width="1366" height="736"><path d="M1212.5 179 V392" stroke="#888" stroke-dasharray="1 1"/></svg>
<svg style="left:0;top:0" width="1366" height="736"><path d="M1212.5 401 V584" stroke="#888" stroke-dasharray="1 1"/></svg>
<svg style="left:0;top:0" width="1366" height="736"><path d="M1231.5 179 V380" stroke="#888" stroke-dasharray="1 1"/></svg>
<svg style="left:0;top:0" width="1366" height="736"><path d="M1231.5 404 V572" stroke="#888" stroke-dasharray="1 1"/></svg>
<svg style="left:0;top:0" width="1366" height="736"><path d="M1231.5 596 V636" stroke="#888" stroke-dasharray="1 1"/></svg>
<div class="a" style="left:1202px;top:658px;width:12px;height:12px;border:1px solid #8e8f8f;background:linear-gradient(135deg,#dcdcdc,#fff)"></div>
<svg style="left:1204px;top:660px" width="9" height="8"><path d="M1 4 L3.5 6.5 L8 1" fill="none" stroke="#111" stroke-width="2"/></svg>
<div class="t" style="left:1220px;top:658px;font-size:12px">建立字段</div>
<div class="a" style="left:1202px;top:674px;width:12px;height:12px;border:1px solid #8e8f8f;background:linear-gradient(135deg,#dcdcdc,#fff)"></div>
<div class="t" style="left:1220px;top:674px;font-size:12px">建立标题</div>
<div class="a" style="left:1202px;top:690px;width:12px;height:12px;border:1px solid #8e8f8f;background:linear-gradient(135deg,#dcdcdc,#fff)"></div>
<div class="t" style="left:1220px;top:691px;font-size:11px">6004</div>
<div class="a" style="left:0px;top:705px;width:1366px;height:22px;background:#f0f0f0"></div>
<div class="a" style="left:4px;top:707px;width:75px;height:17px;border:1px solid #a0a0a0;border-right-color:#fff;border-bottom-color:#fff"></div>
<div class="a" style="left:81px;top:707px;width:226px;height:17px;border:1px solid #a0a0a0;border-right-color:#fff;border-bottom-color:#fff"></div>
<div class="a" style="left:309px;top:707px;width:1057px;height:17px;border:1px solid #a0a0a0;border-right:none;border-bottom-color:#fff"></div>
<div class="t" style="left:6px;top:710px;font-size:12px">厘米</div>
<svg style="left:84px;top:707px" width="14" height="14"><path d="M0.5 2.5 H4 M2.5 0 V4 M4 2.5 H11.5 V11.5 H2.5 V4" fill="none" stroke="#000" stroke-dasharray="1 1"/><path d="M0 2.5 H4 M2.5 0 V5" stroke="#000"/></svg>
<div class="t" style="left:102px;top:710px;font-size:11px;letter-spacing:0.1px">20.24; 0.16</div>
<div class="t" style="left:312px;top:710px;font-size:11px;letter-spacing:0.3px">Page1</div>
<div class="a" style="left:0px;top:724px;width:1366px;height:3px;background:#fafafa"></div>
<div class="a" style="left:0px;top:727px;width:1366px;height:9px;background:linear-gradient(#1d4468,#3a78b4 40%,#3f82bf)"></div>
<div class="a" style="left:0px;top:727px;width:1366px;height:1px;background:#0b1c2e"></div>
<div class="a" style="left:13px;top:729px;width:28px;height:14px;border-radius:14px 14px 0 0;background:radial-gradient(#cfe3f6,#5f8fbd)"></div>
<div class="a" style="left:90px;top:731px;width:18px;height:8px;border-radius:9px 9px 0 0;border:2px solid #d8c040;border-bottom:none"></div>
<div class="a" style="left:142px;top:731px;width:16px;height:8px;border-radius:8px 8px 0 0;background:#d04030"></div>
<div class="a" style="left:184px;top:728px;width:59px;height:9px;border-radius:3px 3px 0 0;border:1px solid rgba(255,255,255,.75);border-bottom:none;background:linear-gradient(#d2e4f4,#9cc0e0)"></div>
<div class="a" style="left:308px;top:728px;width:59px;height:9px;border-radius:3px 3px 0 0;border:1px solid rgba(255,255,255,.75);border-bottom:none;background:linear-gradient(#d2e4f4,#9cc0e0)"></div>
<div class="a" style="left:370px;top:728px;width:58px;height:9px;border-radius:3px 3px 0 0;border:1px solid rgba(255,255,255,.75);border-bottom:none;background:linear-gradient(#d2e4f4,#9cc0e0)"></div>
<div class="a" style="left:205px;top:731px;width:14px;height:6px;border-radius:7px 7px 0 0;background:#3aa0e0"></div>
<div class="a" style="left:321px;top:730px;width:34px;height:6px;border-radius:4px;background:radial-gradient(#fff,#ddd)"></div>
<div class="a" style="left:383px;top:731px;width:32px;height:6px;background:linear-gradient(#2a3ad0,#1a2aa8)"></div>
<div class="a" style="left:960px;top:727px;width:40px;height:9px;background:linear-gradient(100deg,rgba(255,255,255,0),rgba(255,255,255,.45),rgba(255,255,255,0))"></div>
<div class="a" style="left:1274px;top:689px;width:90px;height:38px;border-radius:19px;background:linear-gradient(#fdfdfd,#f2f2f2);box-shadow:0 0 1.5px #aaa"></div>
<div class="a" style="left:1275px;top:691px;width:35px;height:35px;border-radius:50%;background:linear-gradient(#ececec 0,#dedede 47%,#8ee03a 48%,#6cc41e);border:1px solid #d0d0d0"></div>
<div class="t" style="left:1283px;top:705px;font-size:10px;color:#3a3a2a">45%</div>
<svg style="left:1313px;top:697px" width="8" height="9"><path d="M4 0 L8 4 H5 V9 H3 V4 H0 Z" fill="#e07a2a"/></svg>
<svg style="left:1313px;top:712px" width="8" height="9"><path d="M4 9 L8 5 H5 V0 H3 V5 H0 Z" fill="#3a9a2a"/></svg>
<div class="t" style="left:1327px;top:697px;font-size:9.5px;color:#222">3.2K/S</div>
<div class="t" style="left:1327px;top:712px;font-size:9.5px;color:#222">3.2K/S</div>
<div class="a" style="left:1352px;top:729px;width:14px;height:7px;background:linear-gradient(#6f8aa8,#3a5f8a);border:1px solid #9ab"></div>
<div class="t" style="left:1290px;top:734px;font-size:10px;color:#fff">10:31</div>
</body></html>
